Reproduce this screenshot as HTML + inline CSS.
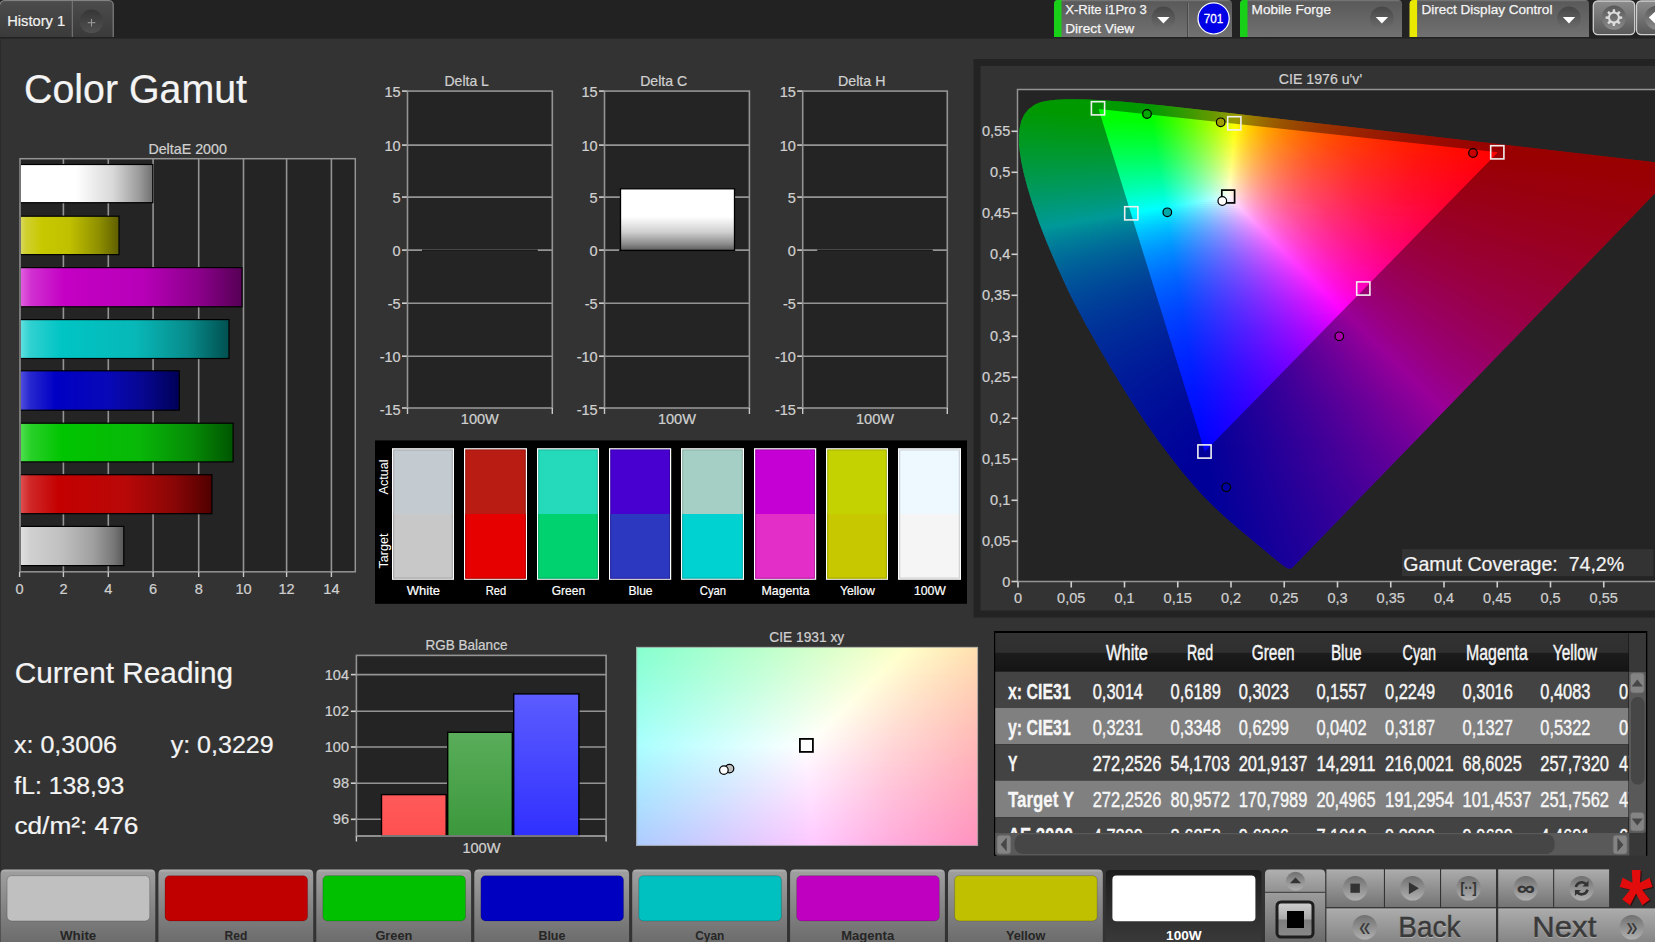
<!DOCTYPE html><html><head><meta charset="utf-8"><title>Color Gamut</title><style>html,body{margin:0;padding:0;background:#333;overflow:hidden}
body{width:1655px;height:942px;position:relative;font-family:"Liberation Sans",sans-serif}
.cie{position:absolute;overflow:hidden}
.cie i{position:absolute;left:0;width:100%;display:block}
svg{position:absolute;left:0;top:0}
text{font-family:"Liberation Sans","DejaVu Sans",sans-serif;white-space:pre}
.u{z-index:0}.o{z-index:2}.cie{z-index:1}
</style></head><body><svg class="u" width="1655" height="942" viewBox="0 0 1655 942"><rect x="973.50" y="59.00" width="700.00" height="558.50" fill="#232323"/>
<rect x="980.50" y="66.00" width="700.00" height="544.50" fill="#333333"/>
<rect x="1017.50" y="89.50" width="640.00" height="492.00" fill="#242424"/></svg><div class="cie" style="left:1018px;top:90px;width:637px;height:492px;clip-path:polygon(274.0px 477.9px,663.5px 76.0px,663.6px 75.6px,663.5px 75.2px,204.4px 22.2px,144.9px 15.6px,105.1px 11.7px,84.4px 10.2px,68.5px 9.4px,50.3px 9.3px,38.3px 9.8px,29.8px 10.7px,24.5px 11.8px,21.9px 12.6px,17.1px 14.6px,14.9px 15.9px,10.7px 19.2px,7.2px 23.3px,5.7px 25.7px,3.3px 31.3px,1.7px 37.9px,0.9px 45.6px,1.0px 54.4px,1.5px 59.3px,3.1px 70.4px,5.8px 83.2px,9.6px 97.8px,14.8px 114.5px,21.4px 133.2px,29.4px 153.7px,38.7px 175.5px,49.2px 198.5px,55.0px 210.3px,67.5px 234.0px,80.9px 257.6px,94.5px 280.7px,108.2px 302.9px,114.9px 313.5px,128.2px 333.4px,140.9px 351.4px,153.0px 367.6px,164.4px 382.0px,174.8px 394.3px,183.9px 404.4px,195.8px 416.5px,206.5px 426.5px,219.1px 437.5px,257.6px 469.6px,265.5px 475.8px,269.8px 478.4px,272.1px 478.6px)"><i style="top:8px;height:2px;background:linear-gradient(90deg,#0f0 34px,#0f0 83px)"></i><i style="top:10px;height:2px;background:linear-gradient(90deg,#0f0 21px,#0f0 110px)"></i><i style="top:12px;height:2px;background:linear-gradient(90deg,#0f0 16px,#01ff00 131px)"></i><i style="top:14px;height:2px;background:linear-gradient(90deg,#0f0 12px,#0f0 130px,#30ff00 151px)"></i><i style="top:16px;height:2px;background:linear-gradient(90deg,#0f0 10px,#0f0 131px,#5eff00 169px)"></i><i style="top:18px;height:2px;background:linear-gradient(90deg,#00ff02 7px,#0f0 131px,#43ff00 159px,#93ff00 187px)"></i><i style="top:20px;height:2px;background:linear-gradient(90deg,#00ff05 6px,#0f0 40px,#01ff00 132px,#61ff00 170px,#96ff00 188px,#cdff00 205px)"></i><i style="top:22px;height:2px;background:linear-gradient(90deg,#00ff09 4px,#0f0 61px,#0f0 132px,#3aff00 156px,#7f0 178px,#b9ff00 199px,#fdff00 218px,#fff200 222px)"></i><i style="top:24px;height:2px;background:linear-gradient(90deg,#00ff0c 3px,#0f0 82px,#0f0 132px,#35ff00 154px,#74ff00 177px,#b6ff00 198px,#feff00 218px,#ffdb00 229px,#ffbd00 240px)"></i><i style="top:26px;height:2px;background:linear-gradient(90deg,#00ff0f 2px,#0f0 104px,#01ff00 133px,#39ff00 156px,#7f0 178px,#baff00 199px,#feff00 218px,#ffc600 236px,#ff9800 257px)"></i><i style="top:28px;height:2px;background:linear-gradient(90deg,#00ff13 1px,#0f0 133px,#39ff00 156px,#7f0 178px,#baff00 199px,#ff0 218px,#ffd900 229px,#ffb700 242px,#ff9800 257px,#ff7d00 274px)"></i><i style="top:30px;height:2px;background:linear-gradient(90deg,#00ff16 1px,#00ff03 133px,#36ff00 155px,#74ff00 177px,#b3ff00 197px,#fffe00 218px,#ffd000 232px,#ffa600 249px,#ff8300 269px,#ff6500 292px)"></i><i style="top:32px;height:2px;background:linear-gradient(90deg,#00ff19 0px,#01ff07 134px,#3bff02 157px,#7f0 178px,#b7ff00 198px,#fdff00 217px,#ffc700 235px,#ff9a00 255px,#ff7300 280px,#ff5400 309px)"></i><i style="top:34px;height:2px;background:linear-gradient(90deg,#00ff1d 0px,#00ff0b 134px,#3aff07 157px,#76ff03 178px,#b7ff00 198px,#fdff00 217px,#ffda00 228px,#ffc100 237px,#ffa700 248px,#ff8e00 261px,#f60 290px,#ff4500 326px)"></i><i style="top:36px;height:2px;background:linear-gradient(90deg,#00ff20 0px,#00ff10 134px,#37ff0c 156px,#76ff08 178px,#b8ff03 198px,#feff00 217px,#ffd900 228px,#fb0 239px,#ff9e00 252px,#ff8500 266px,#ff5b00 300px,#ff3800 344px)"></i><i style="top:38px;height:2px;background:linear-gradient(90deg,#00ff24 0px,#01ff14 135px,#3cff11 158px,#79ff0d 179px,#bbff08 199px,#ffff04 217px,#ffd901 228px,#ffb500 241px,#ff9700 255px,#ff7d00 271px,#f60 289px,#ff5100 310px,#ff2e00 361px)"></i><i style="top:40px;height:2px;background:linear-gradient(90deg,#00ff27 0px,#00ff19 135px,#39ff16 157px,#76ff12 178px,#b8ff0e 198px,#ffff0a 217px,#ffd506 229px,#ffb002 243px,#ff9100 258px,#ff7500 276px,#ff5d00 297px,#ff4800 320px,#ff2500 378px)"></i><i style="top:42px;height:2px;background:linear-gradient(90deg,#00ff2a 0px,#00ff1e 135px,#35ff1b 156px,#76ff17 178px,#b8ff14 198px,#fcff10 216px,#fffe10 217px,#ffce0a 231px,#ffaa06 245px,#ff8a02 262px,#ff6e00 281px,#f50 304px,#ff4000 330px,#ff2d00 361px,#ff1d00 396px)"></i><i style="top:44px;height:2px;background:linear-gradient(90deg,#00ff2e 0px,#01ff22 136px,#3aff1f 158px,#79ff1c 179px,#b8ff19 198px,#fdff16 216px,#ffcd0f 231px,#ffa70a 246px,#ff8506 264px,#ff6701 286px,#ff4e00 311px,#ff3900 340px,#ff2600 374px,#ff1600 413px)"></i><i style="top:46px;height:2px;background:linear-gradient(90deg,#00ff31 0px,#00ff27 136px,#37ff25 157px,#72ff22 177px,#aeff1f 195px,#feff1c 216px,#fffc1b 217px,#ffcc14 231px,#ffa20e 248px,#ff8009 267px,#ff6204 290px,#ff4800 317px,#ff3200 349px,#ff2000 386px,#ff1000 430px)"></i><i style="top:48px;height:2px;background:linear-gradient(90deg,#00ff35 0px,#00ff2c 136px,#37ff2a 157px,#75ff27 178px,#b9ff25 198px,#feff22 216px,#ffcb19 231px,#ff9f12 249px,#ff7b0b 270px,#ff5d06 294px,#ff4302 323px,#ff2d00 358px,#ff1a00 399px,#ff0b00 448px)"></i><i style="top:50px;height:2px;background:linear-gradient(90deg,#00ff38 0px,#01ff30 137px,#3cff2f 159px,#78ff2d 179px,#b9ff2b 198px,#ffff28 216px,#ffcb1e 231px,#ff9c16 250px,#ff770e 272px,#ff5809 298px,#ff3e04 329px,#ff2800 367px,#ff1500 412px,#ff0600 465px)"></i><i style="top:52px;height:2px;background:linear-gradient(90deg,#00ff3c 0px,#00ff35 137px,#38ff34 158px,#75ff32 178px,#b6ff31 197px,#fffe2e 216px,#ffe028 224px,#ffc723 232px,#ff9a19 251px,#ff7311 274px,#ff530b 302px,#ff3905 336px,#ff2301 376px,#f10 424px,#ff0200 482px)"></i><i style="top:54px;height:2px;background:linear-gradient(90deg,#00ff40 0px,#00ff3a 137px,#35ff39 157px,#75ff38 178px,#b2ff37 196px,#fffd35 216px,#ffdf2e 224px,#ffc327 233px,#ff951d 253px,#ff6f14 277px,#ff4e0d 307px,#ff3306 344px,#ff1d01 389px,#ff0800 453px,#f00 500px)"></i><i style="top:56px;height:2px;background:linear-gradient(90deg,#00ff43 0px,#01ff3f 138px,#3aff3f 159px,#74ff3e 178px,#afff3d 195px,#fffc3b 216px,#ffdb33 225px,#ffc02c 234px,#ff9020 255px,#ff6916 281px,#ff490e 312px,#ff2d07 354px,#ff1602 405px,#f00 485px,#f00 517px)"></i><i style="top:58px;height:2px;background:linear-gradient(90deg,#00ff47 0px,#00ff45 138px,#37ff44 158px,#71ff43 177px,#acff43 194px,#feff42 215px,#fffc41 216px,#ffda38 225px,#ffbf31 234px,#ffa62a 244px,#ff8e24 256px,#ff6619 283px,#ff4410 317px,#ff2708 364px,#ff1002 423px,#f00 483px,#f00 535px)"></i><i style="top:60px;height:2px;background:linear-gradient(90deg,#00ff4b 0px,#00ff4a 138px,#39ff4a 159px,#77ff49 179px,#bbff49 198px,#ffff49 215px,#ffdd3f 224px,#ffbe36 234px,#ffa32e 245px,#ff8b27 257px,#ff611b 286px,#ff4112 321px,#ff2209 373px,#ff0a02 439px,#f00 481px,#f00 552px)"></i><i style="top:62px;height:2px;background:linear-gradient(90deg,#00ff4e 0px,#00ff4f 138px,#33ff4f 157px,#74ff4f 178px,#b3ff4f 196px,#fffe4f 215px,#ffdc45 224px,#ffbd3b 234px,#ffa233 245px,#ff882b 258px,#ff5e1e 288px,#ff3d13 325px,#ff1e0a 381px,#ff0602 455px,#ff0001 480px,#f00 569px)"></i><i style="top:64px;height:2px;background:linear-gradient(90deg,#00ff52 0px,#00ff54 139px,#38ff55 159px,#74ff55 178px,#b4ff56 196px,#fffd56 215px,#ffdb4a 224px,#ffb93f 235px,#ff9d36 247px,#ff842e 260px,#ff5a20 291px,#ff3915 330px,#ff190a 392px,#ff0102 475px,#f00 587px)"></i><i style="top:66px;height:2px;background:linear-gradient(90deg,#00ff56 0px,#00ff5a 139px,#37ff5a 159px,#73ff5b 178px,#b0ff5c 195px,#fffd5d 215px,#ffda50 224px,#ffb945 235px,#ff9c3a 247px,#ff8131 261px,#ff5722 293px,#ff3516 334px,#ff170c 395px,#ff0004 475px,#f00 604px)"></i><i style="top:68px;height:2px;background:linear-gradient(90deg,#00ff5a 0px,#00ff5f 139px,#31ff60 157px,#70ff61 177px,#acff63 194px,#feff64 214px,#fffc63 215px,#ffd655 225px,#ffb549 236px,#ff993e 248px,#ff7f35 262px,#ff682c 278px,#ff5324 296px,#ff3218 339px,#ff160d 397px,#ff0005 473px,#f00 621px)"></i><i style="top:70px;height:2px;background:linear-gradient(90deg,#00ff5e 1px,#01ff65 140px,#39ff66 160px,#76ff68 179px,#b8ff6a 197px,#ffff6c 214px,#ffd85c 224px,#ffb74f 235px,#ff9843 248px,#ff7e39 262px,#ff6730 278px,#ff5227 297px,#ff301a 341px,#ff150f 398px,#ff0007 471px,#f00 573px,#f00 637px)"></i><i style="top:72px;height:2px;background:linear-gradient(90deg,#00ff62 1px,#00ff6a 140px,#39ff6c 160px,#76ff6e 179px,#b8ff70 197px,#fffe73 214px,#ffd762 224px,#ffb654 235px,#ff9747 248px,#ff7d3d 262px,#f63 278px,#ff512a 297px,#ff2f1c 341px,#ff1511 397px,#ff0009 469px,#f00 637px)"></i><i style="top:74px;height:2px;background:linear-gradient(90deg,#0f6 1px,#00ff70 140px,#32ff72 158px,#73ff75 178px,#b1ff77 195px,#fffe7a 214px,#ffd668 224px,#ffb55a 235px,#ff964c 248px,#ff7c41 262px,#ff6537 278px,#ff502d 297px,#ff2e1e 341px,#ff1513 396px,#ff000a 467px,#f00 637px)"></i><i style="top:76px;height:2px;background:linear-gradient(90deg,#00ff6a 2px,#01ff76 141px,#3bff78 161px,#76ff7b 179px,#b1ff7e 195px,#fffd81 214px,#ffd66e 224px,#ffb45f 235px,#ff9551 248px,#ff7c45 262px,#ff653a 278px,#ff4f30 297px,#ff2e21 341px,#ff1415 396px,#ff000c 465px,#f00 637px)"></i><i style="top:78px;height:2px;background:linear-gradient(90deg,#00ff6e 2px,#00ff7c 141px,#37ff7f 160px,#72ff82 178px,#adff85 194px,#feff89 213px,#fffc88 214px,#ffd575 224px,#ffb364 235px,#ff9455 248px,#ff7b49 262px,#ff643e 278px,#ff4f34 297px,#ff2d23 341px,#ff1417 395px,#ff000d 464px,#ff0001 637px)"></i><i style="top:80px;height:2px;background:linear-gradient(90deg,#00ff72 3px,#00ff81 141px,#30ff84 158px,#6eff88 177px,#b6ff8c 196px,#feff91 213px,#fffb8f 214px,#ffd47b 224px,#ffb26a 235px,#ff945a 248px,#ff7a4d 262px,#ff6341 278px,#ff4e37 297px,#ff2c26 341px,#ff1319 395px,#ff000f 462px,#ff0002 637px)"></i><i style="top:82px;height:2px;background:linear-gradient(90deg,#00ff76 3px,#01ff88 142px,#3cff8c 162px,#79ff90 180px,#baff94 197px,#ffff98 213px,#ffd683 223px,#ffb471 234px,#ff9761 246px,#ff7c53 260px,#ff6546 276px,#ff503b 294px,#ff2d29 339px,#ff141b 392px,#f01 460px,#ff0003 637px)"></i><i style="top:84px;height:2px;background:linear-gradient(90deg,#00ff7a 3px,#00ff8e 142px,#38ff92 161px,#75ff96 179px,#b6ff9b 196px,#fffea0 213px,#ffd589 223px,#ffb376 234px,#ff9666 246px,#ff7b57 260px,#ff644a 276px,#ff4f3f 294px,#ff2c2b 339px,#ff131d 392px,#ff0013 458px,#ff0004 637px)"></i><i style="top:86px;height:2px;background:linear-gradient(90deg,#00ff7e 4px,#00ff94 142px,#31ff98 159px,#71ff9d 178px,#aeffa2 194px,#fffda7 213px,#ffd590 223px,#ffb27c 234px,#ff956b 246px,#ff7b5b 260px,#ff634e 276px,#ff4f42 294px,#ff2c2e 339px,#ff1320 391px,#ff0014 456px,#ff0005 637px)"></i><i style="top:88px;height:2px;background:linear-gradient(90deg,#00ff82 5px,#01ff9a 143px,#3aff9f 162px,#75ffa4 179px,#aeffa9 194px,#fdffb0 212px,#fffcaf 213px,#ffd496 223px,#ffb181 234px,#ff9470 246px,#ff7a60 260px,#ff6252 276px,#ff4e45 294px,#ff2b30 339px,#ff1322 390px,#ff0016 454px,#ff0006 637px)"></i><i style="top:90px;height:2px;background:linear-gradient(90deg,#00ff87 5px,#00ffa1 143px,#37ffa6 161px,#71ffab 178px,#b7ffb2 196px,#feffb9 212px,#fffbb6 213px,#ffd69f 222px,#ffb389 233px,#ff9375 246px,#ff7964 260px,#ff6155 276px,#ff4d49 294px,#ff2a33 339px,#ff1324 389px,#ff0018 452px,#ff0007 637px)"></i><i style="top:92px;height:2px;background:linear-gradient(90deg,#00ff8b 6px,#00ff98 81px,#00ffa7 143px,#33ffac 160px,#74ffb3 179px,#b7ffba 196px,#ffffc1 212px,#ffd9a8 221px,#ffb590 232px,#ff947b 245px,#ff796a 259px,#ff625a 275px,#ff4d4d 293px,#ff2b36 337px,#ff1326 387px,#ff001a 450px,#ff0008 637px)"></i><i style="top:94px;height:2px;background:linear-gradient(90deg,#00ff90 6px,#00ff9d 81px,#01ffae 144px,#3cffb4 163px,#78ffbb 180px,#b7ffc2 196px,#fffec9 212px,#ffd8af 221px,#ffb496 232px,#ff9380 245px,#ff796e 259px,#ff615e 275px,#ff4c50 293px,#ff2a39 337px,#ff1329 386px,#ff001c 448px,#ff0009 637px)"></i><i style="top:96px;height:2px;background:linear-gradient(90deg,#00ff94 7px,#00ffa3 82px,#00ffb4 144px,#38ffbb 162px,#74ffc2 179px,#afffc9 194px,#fffdd1 212px,#ffd7b6 221px,#ffb39c 232px,#ff9285 245px,#ff7872 259px,#ff6062 275px,#ff4c53 293px,#ff2a3b 337px,#ff132b 385px,#ff001e 446px,#ff000a 637px)"></i><i style="top:98px;height:2px;background:linear-gradient(90deg,#00ff98 7px,#00ffa8 82px,#0fb 144px,#31ffc1 160px,#70ffc9 178px,#abffd0 193px,#fdffdb 211px,#fffcd9 212px,#ffd6bd 221px,#ffb2a2 232px,#ff918a 245px,#f77 259px,#ff5f66 275px,#ff4b57 293px,#ff293e 337px,#ff122d 385px,#ff0020 444px,#ff0014 529px,#ff000b 637px)"></i><i style="top:100px;height:2px;background:linear-gradient(90deg,#00ff9d 8px,#00ffae 83px,#01ffc2 145px,#3affca 163px,#73ffd1 179px,#b8ffda 196px,#feffe4 211px,#fffbe1 212px,#ffd5c4 221px,#ffb1a8 232px,#ff9391 244px,#ff787d 258px,#ff606a 274px,#ff4b5b 292px,#ff2840 337px,#ff122f 384px,#f02 442px,#ff0015 527px,#ff000c 637px)"></i><i style="top:102px;height:2px;background:linear-gradient(90deg,#00ffa2 8px,#00ffb3 83px,#00ffc9 145px,#39ffd1 163px,#77ffda 180px,#b9ffe3 196px,#ffffed 211px,#ffd4cb 221px,#ffb3b1 231px,#ff9498 243px,#ff7883 257px,#ff606f 273px,#ff4b5f 291px,#ff2944 335px,#ff1232 382px,#ff0024 440px,#ff0017 526px,#ff000d 637px)"></i><i style="top:104px;height:2px;background:linear-gradient(90deg,#00ffa6 9px,#00ffb9 83px,#00ffd0 145px,#32ffd7 161px,#73ffe1 179px,#b5ffeb 195px,#fffef5 211px,#ffd7d5 220px,#ffb2b7 231px,#ff939e 243px,#ff7787 257px,#ff5f73 273px,#ff4a62 291px,#ff2846 335px,#ff1234 381px,#ff0026 438px,#ff0018 525px,#ff000e 637px)"></i><i style="top:106px;height:2px;background:linear-gradient(90deg,#00ffab 10px,#00ffbf 85px,#01ffd7 146px,#3cffe1 164px,#77ffea 180px,#b5fff4 195px,#fffdfe 211px,#ffd6dc 220px,#ffb1bd 231px,#ff92a3 243px,#ff768c 257px,#ff5e77 273px,#ff4a66 291px,#ff2749 335px,#ff1237 380px,#ff0028 436px,#ff001a 523px,#ff000f 637px)"></i><i style="top:108px;height:2px;background:linear-gradient(90deg,#00ffb0 10px,#00ffc5 85px,#00ffdf 146px,#31ffe7 161px,#63ffef 175px,#c3ffff 198px,#fff3fe 213px,#ffcddd 222px,#ffaabe 233px,#ff8da5 245px,#ff728e 259px,#ff5b79 275px,#ff4768 293px,#ff254a 338px,#ff1139 381px,#ff002a 434px,#ff001b 521px,#ff0010 635px)"></i><i style="top:110px;height:2px;background:linear-gradient(90deg,#00ffb5 11px,#00ffcb 85px,#00ffe6 146px,#41fff1 166px,#8fffff 186px,#ffe9fe 215px,#ffc5de 224px,#ffa4c0 235px,#ff85a4 248px,#ff6c8e 262px,#ff567a 278px,#ff4369 296px,#ff234b 341px,#ff103a 382px,#ff002c 432px,#ff001d 519px,#f01 633px)"></i><i style="top:112px;height:2px;background:linear-gradient(90deg,#00ffba 12px,#00ffd1 86px,#01ffee 147px,#62ffff 175px,#ffdffe 217px,#ffbadc 227px,#ff9bbf 238px,#ff80a6 250px,#ff688f 264px,#ff537c 280px,#ff406a 298px,#ff214d 343px,#ff0f3c 383px,#ff002e 430px,#ff001e 517px,#ff0012 631px)"></i><i style="top:114px;height:2px;background:linear-gradient(90deg,#00ffbf 12px,#00ffd7 86px,#00fff5 147px,#35ffff 163px,#94ecff 190px,#ffd6fe 219px,#ffb3dc 229px,#ff95c0 240px,#ff7aa6 253px,#ff6390 267px,#ff3c6a 302px,#ff1e4e 346px,#ff0e3e 384px,#ff0030 429px,#ff0020 516px,#ff0013 629px)"></i><i style="top:116px;height:2px;background:linear-gradient(90deg,#00ffc4 13px,#00ffde 87px,#00fffd 147px,#73eaff 182px,#ffcdfe 221px,#ffacdd 231px,#ff8fc1 242px,#ff75a7 255px,#ff5f91 269px,#ff396c 304px,#ff1c4f 349px,#f03 427px,#ff0021 514px,#ff0014 627px)"></i><i style="top:118px;height:2px;background:linear-gradient(90deg,#00ffc9 14px,#00ffe2 82px,#0ff 138px,#00faff 147px,#6ce3ff 181px,#ffc5fe 223px,#ffa5de 233px,#ff8ac2 244px,#ff71a8 257px,#ff5a91 272px,#ff366d 307px,#ff1a50 352px,#ff0035 425px,#ff0023 512px,#ff0015 625px)"></i><i style="top:120px;height:2px;background:linear-gradient(90deg,#00ffce 14px,#00ffe4 74px,#0ff 126px,#00f2ff 148px,#79d9ff 186px,#ffbcfe 225px,#ff9edf 235px,#ff82c1 247px,#ff6ba8 260px,#ff5793 274px,#ff346e 309px,#ff1851 354px,#ff0037 423px,#ff0025 509px,#ff0017 623px)"></i><i style="top:122px;height:2px;background:linear-gradient(90deg,#00ffd3 15px,#00ffe8 68px,#0ff 114px,#00ebff 148px,#75d2ff 186px,#ffb5fe 227px,#ff98df 237px,#ff7dc2 249px,#ff67a9 262px,#ff5394 276px,#ff316f 312px,#ff1652 357px,#ff003a 421px,#ff0027 507px,#ff0018 621px)"></i><i style="top:124px;height:2px;background:linear-gradient(90deg,#00ffd9 16px,#0ff 102px,#00e4ff 148px,#6fccff 185px,#ffadfe 229px,#ff95e3 238px,#ff7cc7 249px,#ff559b 274px,#ff3578 305px,#ff1d5c 343px,#ff0d4b 378px,#ff003c 419px,#ff0028 505px,#ff0019 619px)"></i><i style="top:126px;height:2px;background:linear-gradient(90deg,#00ffde 16px,#0ff 90px,#0df 149px,#7bc3ff 190px,#ffa6fe 231px,#ff8fe3 240px,#ff77c8 251px,#ff519c 276px,#ff3379 307px,#ff1b5e 345px,#ff003f 417px,#ff002a 503px,#ff001a 617px)"></i><i style="top:128px;height:2px;background:linear-gradient(90deg,#00ffe4 17px,#0ff 78px,#00d7ff 149px,#77bdff 190px,#ff9ffe 233px,#ff89e4 242px,#ff73c9 253px,#ff4e9e 278px,#ff317b 309px,#ff195f 347px,#ff0041 415px,#ff002c 501px,#ff001b 616px)"></i><i style="top:130px;height:2px;background:linear-gradient(90deg,#00ffe9 18px,#0ff 66px,#00d1ff 149px,#71b8ff 189px,#ff99fe 235px,#ff83e4 244px,#ff6eca 255px,#ff4b9f 280px,#ff2e7c 311px,#ff1860 349px,#f04 413px,#ff002d 499px,#ff001d 614px)"></i><i style="top:132px;height:2px;background:linear-gradient(90deg,#00ffef 19px,#0ff 54px,#00cbff 150px,#79b0ff 193px,#ff93fe 237px,#ff7ee5 246px,#ff6acb 257px,#ff48a0 282px,#ff2c7e 313px,#ff1662 351px,#ff0046 411px,#ff002f 497px,#ff001e 612px)"></i><i style="top:134px;height:2px;background:linear-gradient(90deg,#00fff5 19px,#0ff 42px,#00c5ff 150px,#79abff 194px,#ff8dff 239px,#ff79e5 248px,#ff65cc 259px,#ff45a1 284px,#ff2a7f 315px,#ff1564 352px,#ff0049 409px,#ff0031 495px,#ff001f 610px)"></i><i style="top:136px;height:2px;background:linear-gradient(90deg,#00fffa 20px,#0ff 30px,#00f9ff 43px,#00c0ff 150px,#73a6ff 193px,#ff87ff 241px,#ff61cc 261px,#ff42a3 286px,#ff2880 317px,#ff1365 354px,#ff004b 407px,#f03 493px,#ff0021 608px)"></i><i style="top:138px;height:2px;background:linear-gradient(90deg,#00feff 21px,#0bf 151px,#7b9fff 197px,#ff81ff 243px,#ff5dcd 263px,#ff3fa4 288px,#ff2682 319px,#ff1266 356px,#ff004e 405px,#ff0035 491px,#f02 606px)"></i><i style="top:140px;height:2px;background:linear-gradient(90deg,#00f8ff 22px,#00b6ff 151px,#779bff 197px,#ff7cff 245px,#ff59ce 265px,#ff3ca5 290px,#ff2484 320px,#ff1068 357px,#ff0051 403px,#ff003f 456px,#ff0030 523px,#ff0023 604px)"></i><i style="top:142px;height:2px;background:linear-gradient(90deg,#00f2ff 22px,#00b1ff 151px,#7496ff 197px,#f7f 247px,#ff55cf 267px,#ff39a6 292px,#ff2285 322px,#ff0f69 359px,#ff0054 401px,#ff0040 457px,#ff0031 522px,#ff0025 602px)"></i><i style="top:144px;height:2px;background:linear-gradient(90deg,#00edff 23px,#01acff 152px,#7c90ff 201px,#ff72ff 249px,#ff52cf 269px,#ff36a7 294px,#ff2086 324px,#ff0d6a 361px,#ff0057 399px,#ff0042 458px,#f03 522px,#ff0026 600px)"></i><i style="top:146px;height:2px;background:linear-gradient(90deg,#00e7ff 24px,#00a8ff 152px,#798cff 201px,#ff6dff 251px,#ff4ed0 271px,#ff34a8 296px,#ff1e87 326px,#ff0c6c 362px,#ff005a 397px,#ff0043 458px,#ff0034 521px,#ff0027 598px)"></i><i style="top:148px;height:2px;background:linear-gradient(90deg,#00e2ff 25px,#00a4ff 152px,#7688ff 201px,#ff68ff 253px,#ff4ad1 273px,#ff31a9 298px,#ff1c88 328px,#ff0b6d 364px,#ff005d 395px,#ff0045 459px,#ff0035 521px,#ff0029 596px)"></i><i style="top:150px;height:2px;background:linear-gradient(90deg,#0df 26px,#019fff 153px,#7d82ff 205px,#ff63ff 255px,#ff47d1 275px,#ff2faa 300px,#ff1a8a 330px,#ff0a6f 365px,#ff0060 393px,#ff0046 459px,#ff0037 520px,#ff002a 594px)"></i><i style="top:152px;height:2px;background:linear-gradient(90deg,#00d9ff 26px,#009bff 153px,#7a7eff 205px,#ff5fff 257px,#ff44d2 277px,#ff2cab 302px,#ff188b 332px,#ff0870 367px,#ff0063 391px,#ff0048 460px,#ff0038 520px,#ff002b 592px)"></i><i style="top:154px;height:2px;background:linear-gradient(90deg,#00d4ff 27px,#0097ff 153px,#757cff 204px,#ff5bff 259px,#ff3fd1 280px,#ff2aac 304px,#ff178d 333px,#ff0772 368px,#f06 389px,#ff004a 459px,#ff003a 519px,#ff002d 590px)"></i><i style="top:156px;height:2px;background:linear-gradient(90deg,#00cfff 28px,#0193ff 154px,#7c76ff 208px,#ff57ff 261px,#ff3cd2 282px,#ff27ad 306px,#ff158e 335px,#ff0673 370px,#ff0069 388px,#ff004b 460px,#ff002e 588px)"></i><i style="top:158px;height:2px;background:linear-gradient(90deg,#00cbff 29px,#0090ff 154px,#7b72ff 209px,#ff53ff 263px,#ff39d2 284px,#ff25ae 308px,#ff138f 337px,#ff0575 371px,#ff006c 386px,#ff004c 460px,#ff0030 586px)"></i><i style="top:160px;height:2px;background:linear-gradient(90deg,#00c6ff 30px,#008cff 154px,#7670ff 208px,#ff4fff 265px,#ff36d3 286px,#ff23af 310px,#ff1290 339px,#ff0376 373px,#ff006f 384px,#ff0060 413px,#ff004e 461px,#ff0031 585px)"></i><i style="top:162px;height:2px;background:linear-gradient(90deg,#00c2ff 30px,#0188ff 155px,#7d6aff 212px,#ff4bff 267px,#ff34d3 288px,#ff20b0 312px,#ff1092 340px,#ff0278 374px,#ff0062 414px,#ff004f 461px,#ff0032 583px)"></i><i style="top:164px;height:2px;background:linear-gradient(90deg,#00beff 31px,#0085ff 155px,#7c67ff 213px,#ff47ff 269px,#ff32d6 289px,#ff1fb2 313px,#ff0f94 341px,#ff0179 375px,#ff0064 414px,#ff0051 461px,#ff0034 581px)"></i><i style="top:166px;height:2px;background:linear-gradient(90deg,#00baff 32px,#0082ff 155px,#7865ff 212px,#f4f 271px,#ff2fd6 291px,#ff1db3 315px,#ff0e95 343px,#ff007a 377px,#ff0065 416px,#ff0052 462px,#ff0035 579px)"></i><i style="top:168px;height:2px;background:linear-gradient(90deg,#00b6ff 33px,#017fff 156px,#7e60ff 216px,#ff40ff 273px,#ff2cd7 293px,#ff1bb3 317px,#ff0c96 345px,#ff007c 378px,#f06 417px,#ff0054 462px,#ff0037 577px)"></i><i style="top:170px;height:2px;background:linear-gradient(90deg,#00b2ff 34px,#007cff 156px,#7d5dff 217px,#ff3dff 275px,#ff2ad7 295px,#ff19b4 319px,#ff0a97 347px,#ff007e 379px,#ff0068 417px,#ff0056 462px,#ff0039 575px)"></i><i style="top:172px;height:2px;background:linear-gradient(90deg,#00afff 35px,#0079ff 156px,#795bff 216px,#ff3aff 277px,#ff27d8 297px,#ff17b5 321px,#ff0997 349px,#ff007f 381px,#ff006a 418px,#ff0057 462px,#ff003a 573px)"></i><i style="top:174px;height:2px;background:linear-gradient(90deg,#00abff 36px,#0176ff 157px,#7d57ff 219px,#ff36ff 279px,#ff24d8 299px,#ff15b6 323px,#ff0a9f 344px,#ff018a 368px,#ff0080 382px,#ff006b 419px,#ff0059 462px,#ff003c 571px)"></i><i style="top:176px;height:2px;background:linear-gradient(90deg,#00a8ff 36px,#0073ff 157px,#7c54ff 220px,#f3f 281px,#ff22d9 301px,#ff13b8 324px,#ff008e 367px,#ff0082 383px,#ff006d 420px,#ff005b 462px,#ff003d 569px)"></i><i style="top:178px;height:2px;background:linear-gradient(90deg,#00a4ff 37px,#0070ff 157px,#7a52ff 220px,#ff30ff 283px,#ff20d9 303px,#ff11b8 326px,#ff0092 365px,#ff0084 384px,#ff006e 420px,#ff005c 462px,#ff003f 567px)"></i><i style="top:180px;height:2px;background:linear-gradient(90deg,#00a1ff 38px,#016dff 158px,#7e4eff 223px,#ff2dff 285px,#ff1dd9 305px,#ff0fb9 328px,#ff0096 363px,#ff0085 385px,#ff0070 421px,#ff005e 462px,#ff0041 565px)"></i><i style="top:182px;height:2px;background:linear-gradient(90deg,#009eff 39px,#006bff 158px,#7d4bff 224px,#ff2bff 287px,#ff1bda 307px,#ff0eba 330px,#f09 362px,#ff0086 387px,#ff0071 422px,#ff005f 463px,#ff0042 563px)"></i><i style="top:184px;height:2px;background:linear-gradient(90deg,#009aff 40px,#0068ff 158px,#794aff 223px,#ff28ff 289px,#ff19da 309px,#ff0cbb 332px,#ff009e 360px,#f08 388px,#ff0073 422px,#ff0061 462px,#f04 561px)"></i><i style="top:186px;height:2px;background:linear-gradient(90deg,#0097ff 41px,#0166ff 159px,#7c46ff 226px,#ff25ff 291px,#ff17db 311px,#ff0abc 333px,#ff00a2 358px,#ff0089 389px,#ff0075 423px,#ff0063 462px,#ff0046 559px)"></i><i style="top:188px;height:2px;background:linear-gradient(90deg,#0094ff 42px,#0063ff 159px,#7c44ff 227px,#f2f 293px,#ff14db 313px,#ff09bd 335px,#ff00a7 356px,#ff008b 390px,#ff0076 424px,#ff0065 462px,#ff0047 557px)"></i><i style="top:190px;height:2px;background:linear-gradient(90deg,#0091ff 43px,#0061ff 159px,#7a42ff 227px,#ff20ff 295px,#ff12dc 315px,#ff07be 337px,#ff00ab 354px,#ff008c 391px,#ff0078 424px,#f06 462px,#ff0049 555px)"></i><i style="top:192px;height:2px;background:linear-gradient(90deg,#008eff 44px,#015eff 160px,#7d3fff 230px,#ff1dff 297px,#ff10dc 317px,#ff05be 339px,#ff00b0 352px,#ff008d 393px,#ff0067 463px,#ff004a 554px)"></i><i style="top:194px;height:2px;background:linear-gradient(90deg,#008bff 45px,#005cff 160px,#7d3cff 231px,#ff1bff 299px,#ff0edc 319px,#ff04bf 341px,#ff00a5 366px,#ff008f 394px,#ff0069 463px,#ff004c 552px)"></i><i style="top:196px;height:2px;background:linear-gradient(90deg,#08f 46px,#005aff 160px,#7b3bff 231px,#ff19ff 301px,#ff0cdd 321px,#ff02c1 342px,#ff00a7 367px,#ff0090 395px,#ff006b 463px,#ff004e 550px)"></i><i style="top:198px;height:2px;background:linear-gradient(90deg,#0086ff 46px,#0158ff 161px,#7c38ff 233px,#ff16ff 303px,#ff0add 323px,#ff01c1 344px,#ff00a8 368px,#ff0092 396px,#ff006c 463px,#ff0050 548px)"></i><i style="top:200px;height:2px;background:linear-gradient(90deg,#0083ff 47px,#0056ff 161px,#7c36ff 234px,#ff14ff 305px,#ff09dd 325px,#ff00c2 346px,#ff00a9 370px,#ff0093 397px,#ff006f 462px,#ff0052 546px)"></i><i style="top:202px;height:2px;background:linear-gradient(90deg,#0080ff 48px,#0054ff 161px,#7c34ff 235px,#ff12ff 307px,#ff07df 326px,#ff00c4 347px,#ff00ab 371px,#ff0095 398px,#ff0070 462px,#ff0054 544px)"></i><i style="top:204px;height:2px;background:linear-gradient(90deg,#007eff 49px,#0152ff 162px,#7d31ff 237px,#ff10ff 309px,#ff00cf 340px,#ff00c4 349px,#ff00ab 373px,#ff0096 399px,#ff0072 462px,#f05 542px)"></i><i style="top:206px;height:2px;background:linear-gradient(90deg,#007bff 50px,#0050ff 162px,#7d2fff 238px,#ff0dff 311px,#ff00d5 338px,#ff00c5 351px,#ff00ad 374px,#ff0098 400px,#ff0074 462px,#ff0057 540px)"></i><i style="top:208px;height:2px;background:linear-gradient(90deg,#0079ff 51px,#004eff 162px,#7b2eff 238px,#ff0bff 313px,#ff00db 336px,#ff00c6 352px,#ff00ae 375px,#f09 401px,#ff0075 462px,#ff0059 538px)"></i><i style="top:210px;height:2px;background:linear-gradient(90deg,#0076ff 52px,#014cff 163px,#7e2bff 241px,#ff09ff 315px,#ff00e1 334px,#ff00c7 354px,#ff009b 401px,#ff0078 461px,#ff005b 536px)"></i><i style="top:212px;height:2px;background:linear-gradient(90deg,#0074ff 53px,#004aff 163px,#7d29ff 242px,#ff07ff 317px,#ff00e7 332px,#ff00c8 355px,#ff009d 402px,#ff0079 461px,#ff005d 534px)"></i><i style="top:214px;height:2px;background:linear-gradient(90deg,#0071ff 54px,#0049ff 163px,#7c28ff 242px,#ff05ff 319px,#ff00ec 331px,#ff00c9 357px,#ff009e 403px,#ff007b 461px,#ff005f 532px)"></i><i style="top:216px;height:2px;background:linear-gradient(90deg,#006fff 56px,#0147ff 164px,#7d26ff 244px,#ff03ff 321px,#ff00f2 329px,#ff00c9 359px,#ff00a0 404px,#ff007d 460px,#ff0061 530px)"></i><i style="top:218px;height:2px;background:linear-gradient(90deg,#006dff 57px,#0045ff 164px,#7d24ff 245px,#ff02ff 323px,#ff00e3 341px,#ff00cb 360px,#ff00a1 405px,#ff007f 460px,#ff0063 528px)"></i><i style="top:220px;height:2px;background:linear-gradient(90deg,#006aff 58px,#0043ff 164px,#7c22ff 246px,#f0f 325px,#f0c 362px,#ff00a2 406px,#ff0081 460px,#ff0065 526px)"></i><i style="top:222px;height:2px;background:linear-gradient(90deg,#0068ff 59px,#0142ff 165px,#7e20ff 248px,#f0f 327px,#ff00cd 363px,#ff00a4 407px,#ff0083 460px,#ff0067 524px)"></i><i style="top:224px;height:2px;background:linear-gradient(90deg,#06f 60px,#0040ff 165px,#7d1fff 249px,#ef00ff 320px,#f0f 329px,#ff00ce 365px,#ff00a5 408px,#ff0084 460px,#ff0069 523px)"></i><i style="top:226px;height:2px;background:linear-gradient(90deg,#0064ff 61px,#003fff 165px,#7b1eff 249px,#e900ff 318px,#f0f 331px,#ff00cf 366px,#ff00a7 408px,#ff0087 459px,#ff006b 521px)"></i><i style="top:228px;height:2px;background:linear-gradient(90deg,#0062ff 62px,#013dff 166px,#6f1fff 242px,#e300ff 316px,#f0f 333px,#ff00cf 368px,#ff00a9 409px,#f08 459px,#ff006d 519px)"></i><i style="top:230px;height:2px;background:linear-gradient(90deg,#0060ff 63px,#003bff 166px,#6c1fff 241px,#d0f 314px,#f0f 335px,#ff00d0 370px,#f0a 410px,#ff008a 459px,#ff0070 517px)"></i><i style="top:232px;height:2px;background:linear-gradient(90deg,#005eff 64px,#003aff 166px,#691eff 240px,#d700ff 312px,#f0f 337px,#ff00d1 371px,#ff00ac 411px,#ff008c 458px,#ff0072 515px)"></i><i style="top:234px;height:2px;background:linear-gradient(90deg,#005cff 65px,#0138ff 167px,#671dff 240px,#d200ff 311px,#f0f 339px,#ff00d3 372px,#ff00ae 411px,#ff008e 458px,#ff0074 513px)"></i><i style="top:236px;height:2px;background:linear-gradient(90deg,#005aff 66px,#0037ff 167px,#641cff 239px,#cd00ff 309px,#f0f 341px,#ff00d3 374px,#ff00af 412px,#ff0091 457px,#ff0076 511px)"></i><i style="top:238px;height:2px;background:linear-gradient(90deg,#0058ff 67px,#0036ff 167px,#621bff 238px,#c700ff 307px,#fe00ff 343px,#ff00d4 376px,#ff00b0 413px,#ff0092 457px,#ff0079 509px)"></i><i style="top:240px;height:2px;background:linear-gradient(90deg,#0056ff 68px,#0134ff 168px,#601aff 238px,#c100ff 305px,#fe00ff 345px,#ff00d5 377px,#ff00b3 413px,#ff0095 456px,#ff007b 507px)"></i><i style="top:242px;height:2px;background:linear-gradient(90deg,#0054ff 70px,#03f 168px,#5d1aff 237px,#bc00ff 303px,#fe00ff 347px,#ff00d5 379px,#ff00b4 414px,#ff0097 456px,#ff007d 505px)"></i><i style="top:244px;height:2px;background:linear-gradient(90deg,#0052ff 71px,#0032ff 168px,#5b19ff 236px,#b700ff 301px,#fe00ff 349px,#ff00d7 380px,#ff00b5 415px,#ff0098 456px,#ff0080 503px)"></i><i style="top:246px;height:2px;background:linear-gradient(90deg,#0051ff 72px,#0130ff 169px,#5818ff 235px,#b200ff 299px,#fe00ff 351px,#ff00d8 381px,#ff00b7 415px,#ff009b 455px,#ff0082 501px)"></i><i style="top:248px;height:2px;background:linear-gradient(90deg,#004fff 73px,#002fff 169px,#ad00ff 297px,#fe00ff 353px,#ff00d9 383px,#ff00b9 416px,#ff009d 455px,#ff0085 499px)"></i><i style="top:250px;height:2px;background:linear-gradient(90deg,#004dff 74px,#002eff 169px,#a800ff 295px,#fe00ff 355px,#ff00d9 385px,#ff00ba 417px,#ff009f 454px,#ff0087 497px)"></i><i style="top:252px;height:2px;background:linear-gradient(90deg,#004bff 75px,#012cff 170px,#a300ff 293px,#fe00ff 357px,#ff00da 386px,#ff00bc 417px,#ff00a2 453px,#ff008a 495px)"></i><i style="top:254px;height:2px;background:linear-gradient(90deg,#004aff 76px,#002bff 170px,#9e00ff 291px,#fe00ff 359px,#ff00dc 387px,#ff00be 418px,#ff00a3 453px,#ff008c 493px)"></i><i style="top:256px;height:2px;background:linear-gradient(90deg,#0048ff 77px,#002aff 170px,#9a00ff 289px,#fe00ff 361px,#ff00dc 389px,#ff00bf 419px,#ff00a5 453px,#ff008f 492px)"></i><i style="top:258px;height:2px;background:linear-gradient(90deg,#0046ff 79px,#0029ff 170px,#9500ff 287px,#fe00ff 363px,#f0d 390px,#ff00c1 419px,#ff00a8 452px,#ff0091 490px)"></i><i style="top:260px;height:2px;background:linear-gradient(90deg,#0045ff 80px,#0128ff 171px,#9100ff 285px,#fe00ff 365px,#ff00de 392px,#ff00c2 420px,#f0a 452px,#ff0094 488px)"></i><i style="top:262px;height:2px;background:linear-gradient(90deg,#0043ff 81px,#0027ff 171px,#8c00ff 283px,#fe00ff 367px,#ff00df 393px,#ff00c4 420px,#ff00ac 451px,#ff0097 486px)"></i><i style="top:264px;height:2px;background:linear-gradient(90deg,#0042ff 82px,#0026ff 171px,#80f 281px,#fe00ff 369px,#ff00df 395px,#ff00c6 421px,#f09 484px)"></i><i style="top:266px;height:2px;background:linear-gradient(90deg,#0040ff 83px,#0124ff 172px,#8400ff 279px,#fe00ff 371px,#ff00e1 396px,#ff00c8 421px,#ff009c 482px)"></i><i style="top:268px;height:2px;background:linear-gradient(90deg,#003eff 85px,#0023ff 172px,#8100ff 278px,#fe00ff 373px,#ff00e2 397px,#ff00c9 422px,#ff009f 480px)"></i><i style="top:270px;height:2px;background:linear-gradient(90deg,#003dff 86px,#02f 172px,#7d00ff 276px,#fe00ff 375px,#ff00cb 422px,#ff00a2 478px)"></i><i style="top:272px;height:2px;background:linear-gradient(90deg,#003cff 87px,#0121ff 173px,#7900ff 274px,#fe00ff 377px,#ff00cd 423px,#ff00a5 476px)"></i><i style="top:274px;height:2px;background:linear-gradient(90deg,#003aff 88px,#0020ff 173px,#7500ff 272px,#fe00ff 379px,#ff00cf 423px,#ff00a8 474px)"></i><i style="top:276px;height:2px;background:linear-gradient(90deg,#0039ff 89px,#001fff 173px,#7100ff 270px,#fe00ff 381px,#ff00d1 423px,#ff00ab 472px)"></i><i style="top:278px;height:2px;background:linear-gradient(90deg,#0037ff 90px,#011eff 174px,#6e00ff 268px,#fe00ff 383px,#ff00d2 424px,#ff00ae 470px)"></i><i style="top:280px;height:2px;background:linear-gradient(90deg,#0036ff 92px,#001dff 174px,#6a00ff 266px,#fe00ff 385px,#ff00d4 424px,#ff00b1 468px)"></i><i style="top:282px;height:2px;background:linear-gradient(90deg,#0035ff 93px,#001cff 174px,#60f 264px,#fe00ff 387px,#ff00d6 425px,#ff00b4 466px)"></i><i style="top:284px;height:2px;background:linear-gradient(90deg,#03f 94px,#011bff 175px,#6300ff 262px,#fe00ff 389px,#ff00d8 425px,#ff00b8 464px)"></i><i style="top:286px;height:2px;background:linear-gradient(90deg,#0032ff 95px,#001aff 175px,#5f00ff 260px,#fe00ff 391px,#ff00da 425px,#f0b 462px)"></i><i style="top:288px;height:2px;background:linear-gradient(90deg,#0030ff 97px,#001aff 175px,#5c00ff 258px,#fe00ff 393px,#ff00db 426px,#ff00be 461px)"></i><i style="top:290px;height:2px;background:linear-gradient(90deg,#002fff 98px,#0119ff 176px,#5800ff 256px,#fe00ff 395px,#f0d 426px,#ff00c1 459px)"></i><i style="top:292px;height:2px;background:linear-gradient(90deg,#002eff 99px,#0018ff 176px,#50f 254px,#fe00ff 397px,#ff00df 427px,#ff00c4 457px)"></i><i style="top:294px;height:2px;background:linear-gradient(90deg,#002dff 100px,#0017ff 176px,#5200ff 252px,#fe00ff 399px,#ff00e1 427px,#ff00c8 455px)"></i><i style="top:296px;height:2px;background:linear-gradient(90deg,#002cff 101px,#0116ff 177px,#4f00ff 250px,#fe00ff 401px,#ff00cb 453px)"></i><i style="top:298px;height:2px;background:linear-gradient(90deg,#002aff 103px,#0015ff 177px,#4c00ff 248px,#a400ff 327px,#fe00ff 403px,#ff00cf 451px)"></i><i style="top:300px;height:2px;background:linear-gradient(90deg,#0029ff 104px,#0014ff 177px,#4900ff 246px,#a200ff 327px,#fe00ff 405px,#ff00d3 449px)"></i><i style="top:302px;height:2px;background:linear-gradient(90deg,#0028ff 105px,#0113ff 178px,#4500ff 244px,#a100ff 327px,#fe00ff 407px,#ff00d7 447px)"></i><i style="top:304px;height:2px;background:linear-gradient(90deg,#0027ff 106px,#0013ff 178px,#4300ff 242px,#9f00ff 327px,#fe00ff 409px,#ff00da 445px)"></i><i style="top:306px;height:2px;background:linear-gradient(90deg,#0025ff 108px,#0012ff 178px,#4100ff 241px,#9e00ff 327px,#fe00ff 411px,#ff00de 443px)"></i><i style="top:308px;height:2px;background:linear-gradient(90deg,#0024ff 109px,#0111ff 179px,#3e00ff 239px,#9c00ff 327px,#fe00ff 413px,#ff00e2 441px)"></i><i style="top:310px;height:2px;background:linear-gradient(90deg,#0023ff 110px,#0010ff 179px,#3b00ff 237px,#9b00ff 327px,#fe00ff 415px,#ff00e6 439px)"></i><i style="top:312px;height:2px;background:linear-gradient(90deg,#02f 111px,#0010ff 179px,#3800ff 235px,#90f 327px,#fe00ff 417px,#ff00ea 437px)"></i><i style="top:314px;height:2px;background:linear-gradient(90deg,#0021ff 113px,#010fff 180px,#3500ff 233px,#90f 328px,#fe00ff 419px,#f0e 435px)"></i><i style="top:316px;height:2px;background:linear-gradient(90deg,#0020ff 114px,#000eff 180px,#30f 231px,#9700ff 328px,#fe00ff 421px,#ff00f3 433px)"></i><i style="top:318px;height:2px;background:linear-gradient(90deg,#001fff 115px,#000dff 180px,#3000ff 229px,#9600ff 328px,#fe00ff 423px,#ff00f7 431px)"></i><i style="top:320px;height:2px;background:linear-gradient(90deg,#001eff 117px,#010dff 181px,#2d00ff 227px,#9400ff 328px,#fe00ff 425px,#ff00fa 430px)"></i><i style="top:322px;height:2px;background:linear-gradient(90deg,#001dff 118px,#000cff 181px,#2b00ff 225px,#9100ff 326px,#f0f 428px)"></i><i style="top:324px;height:2px;background:linear-gradient(90deg,#001cff 119px,#000bff 181px,#2800ff 223px,#8f00ff 326px,#fb00ff 426px)"></i><i style="top:326px;height:2px;background:linear-gradient(90deg,#001aff 121px,#010aff 182px,#2600ff 221px,#8c00ff 324px,#f600ff 424px)"></i><i style="top:328px;height:2px;background:linear-gradient(90deg,#0019ff 122px,#000aff 182px,#2300ff 219px,#8900ff 322px,#f200ff 422px)"></i><i style="top:330px;height:2px;background:linear-gradient(90deg,#0019ff 123px,#0009ff 182px,#2100ff 217px,#8500ff 320px,#e0f 420px)"></i><i style="top:332px;height:2px;background:linear-gradient(90deg,#0017ff 125px,#0108ff 183px,#1e00ff 215px,#8200ff 318px,#ea00ff 418px)"></i><i style="top:334px;height:2px;background:linear-gradient(90deg,#0016ff 126px,#0008ff 183px,#1c00ff 213px,#7f00ff 316px,#e600ff 416px)"></i><i style="top:336px;height:2px;background:linear-gradient(90deg,#0015ff 128px,#0007ff 183px,#1a00ff 211px,#7c00ff 314px,#e200ff 414px)"></i><i style="top:338px;height:2px;background:linear-gradient(90deg,#0014ff 129px,#0106ff 184px,#1700ff 209px,#7900ff 312px,#de00ff 412px)"></i><i style="top:340px;height:2px;background:linear-gradient(90deg,#0014ff 130px,#0006ff 184px,#1500ff 207px,#7600ff 310px,#da00ff 410px)"></i><i style="top:342px;height:2px;background:linear-gradient(90deg,#0012ff 132px,#0005ff 184px,#1300ff 205px,#7300ff 308px,#d600ff 408px)"></i><i style="top:344px;height:2px;background:linear-gradient(90deg,#0012ff 133px,#0105ff 185px,#10f 203px,#7000ff 306px,#d200ff 406px)"></i><i style="top:346px;height:2px;background:linear-gradient(90deg,#0010ff 135px,#0004ff 185px,#0f00ff 202px,#6e00ff 305px,#ce00ff 404px)"></i><i style="top:348px;height:2px;background:linear-gradient(90deg,#0010ff 136px,#0004ff 185px,#0c00ff 199px,#6300ff 295px,#ca00ff 402px)"></i><i style="top:350px;height:2px;background:linear-gradient(90deg,#000fff 137px,#0103ff 186px,#6200ff 295px,#c700ff 400px)"></i><i style="top:352px;height:2px;background:linear-gradient(90deg,#000eff 139px,#0002ff 186px,#6100ff 294px,#c300ff 398px)"></i><i style="top:354px;height:2px;background:linear-gradient(90deg,#000dff 140px,#0002ff 186px,#5f00ff 293px,#c100ff 397px)"></i><i style="top:356px;height:2px;background:linear-gradient(90deg,#000cff 142px,#0101ff 187px,#5e00ff 293px,#bd00ff 395px)"></i><i style="top:358px;height:2px;background:linear-gradient(90deg,#000bff 143px,#0001ff 187px,#5c00ff 292px,#ba00ff 393px)"></i><i style="top:360px;height:2px;background:linear-gradient(90deg,#000aff 145px,#00f 187px,#5a00ff 291px,#b600ff 391px)"></i><i style="top:362px;height:2px;background:linear-gradient(90deg,#0009ff 146px,#00f 187px,#5800ff 289px,#b300ff 389px)"></i><i style="top:364px;height:2px;background:linear-gradient(90deg,#0008ff 148px,#00f 188px,#5700ff 289px,#b000ff 387px)"></i><i style="top:366px;height:2px;background:linear-gradient(90deg,#0008ff 149px,#00f 188px,#ac00ff 385px)"></i><i style="top:368px;height:2px;background:linear-gradient(90deg,#0007ff 151px,#00f 188px,#a900ff 383px)"></i><i style="top:370px;height:2px;background:linear-gradient(90deg,#0006ff 152px,#00f 189px,#a600ff 381px)"></i><i style="top:372px;height:2px;background:linear-gradient(90deg,#0005ff 154px,#00f 189px,#a300ff 379px)"></i><i style="top:374px;height:2px;background:linear-gradient(90deg,#0004ff 156px,#00f 189px,#a000ff 377px)"></i><i style="top:376px;height:2px;background:linear-gradient(90deg,#0003ff 157px,#0100ff 190px,#9d00ff 375px)"></i><i style="top:378px;height:2px;background:linear-gradient(90deg,#0002ff 159px,#00f 190px,#9a00ff 373px)"></i><i style="top:380px;height:2px;background:linear-gradient(90deg,#0002ff 160px,#00f 190px,#9700ff 371px)"></i><i style="top:382px;height:2px;background:linear-gradient(90deg,#0001ff 162px,#0100ff 191px,#9400ff 369px)"></i><i style="top:384px;height:2px;background:linear-gradient(90deg,#00f 164px,#00f 191px,#9100ff 367px)"></i><i style="top:386px;height:2px;background:linear-gradient(90deg,#00f 165px,#00f 191px,#8f00ff 366px)"></i><i style="top:388px;height:2px;background:linear-gradient(90deg,#00f 167px,#0100ff 192px,#8c00ff 364px)"></i><i style="top:390px;height:2px;background:linear-gradient(90deg,#00f 169px,#00f 192px,#8900ff 362px)"></i><i style="top:392px;height:2px;background:linear-gradient(90deg,#00f 170px,#00f 192px,#8700ff 360px)"></i><i style="top:394px;height:2px;background:linear-gradient(90deg,#00f 172px,#0100ff 193px,#8400ff 358px)"></i><i style="top:396px;height:2px;background:linear-gradient(90deg,#00f 174px,#00f 193px,#8100ff 356px)"></i><i style="top:398px;height:2px;background:linear-gradient(90deg,#00f 176px,#00f 193px,#7f00ff 354px)"></i><i style="top:400px;height:2px;background:linear-gradient(90deg,#00f 177px,#0100ff 194px,#7c00ff 352px)"></i><i style="top:402px;height:2px;background:linear-gradient(90deg,#00f 179px,#00f 194px,#7a00ff 350px)"></i><i style="top:404px;height:2px;background:linear-gradient(90deg,#00f 181px,#00f 194px,#70f 348px)"></i><i style="top:406px;height:2px;background:linear-gradient(90deg,#00f 183px,#0100ff 195px,#7400ff 346px)"></i><i style="top:408px;height:2px;background:linear-gradient(90deg,#00f 185px,#00f 195px,#7200ff 344px)"></i><i style="top:410px;height:2px;background:linear-gradient(90deg,#00f 187px,#00f 195px,#7000ff 342px)"></i><i style="top:412px;height:2px;background:linear-gradient(90deg,#00f 189px,#0100ff 196px,#6d00ff 340px)"></i><i style="top:414px;height:2px;background:linear-gradient(90deg,#00f 191px,#0700ff 205px,#6b00ff 338px)"></i><i style="top:416px;height:2px;background:linear-gradient(90deg,#00f 193px,#6800ff 336px)"></i><i style="top:418px;height:2px;background:linear-gradient(90deg,#00f 195px,#6700ff 335px)"></i><i style="top:420px;height:2px;background:linear-gradient(90deg,#00f 197px,#6400ff 333px)"></i><i style="top:422px;height:2px;background:linear-gradient(90deg,#0200ff 199px,#6200ff 331px)"></i><i style="top:424px;height:2px;background:linear-gradient(90deg,#0300ff 201px,#6000ff 329px)"></i><i style="top:426px;height:2px;background:linear-gradient(90deg,#0400ff 203px,#5e00ff 327px)"></i><i style="top:428px;height:2px;background:linear-gradient(90deg,#0600ff 206px,#5b00ff 325px)"></i><i style="top:430px;height:2px;background:linear-gradient(90deg,#0700ff 208px,#5900ff 323px)"></i><i style="top:432px;height:2px;background:linear-gradient(90deg,#0800ff 210px,#5700ff 321px)"></i><i style="top:434px;height:2px;background:linear-gradient(90deg,#0a00ff 213px,#50f 319px)"></i><i style="top:436px;height:2px;background:linear-gradient(90deg,#0b00ff 215px,#5300ff 317px)"></i><i style="top:438px;height:2px;background:linear-gradient(90deg,#0c00ff 217px,#5100ff 315px)"></i><i style="top:440px;height:2px;background:linear-gradient(90deg,#0e00ff 220px,#4f00ff 313px)"></i><i style="top:442px;height:2px;background:linear-gradient(90deg,#0f00ff 222px,#4d00ff 311px)"></i><i style="top:444px;height:2px;background:linear-gradient(90deg,#1000ff 224px,#4b00ff 309px)"></i><i style="top:446px;height:2px;background:linear-gradient(90deg,#1200ff 227px,#4900ff 307px)"></i><i style="top:448px;height:2px;background:linear-gradient(90deg,#1300ff 229px,#4700ff 305px)"></i><i style="top:450px;height:2px;background:linear-gradient(90deg,#1400ff 232px,#4500ff 304px)"></i><i style="top:452px;height:2px;background:linear-gradient(90deg,#1500ff 234px,#40f 302px)"></i><i style="top:454px;height:2px;background:linear-gradient(90deg,#1600ff 236px,#4200ff 300px)"></i><i style="top:456px;height:2px;background:linear-gradient(90deg,#1800ff 239px,#4000ff 298px)"></i><i style="top:458px;height:2px;background:linear-gradient(90deg,#1900ff 241px,#3e00ff 296px)"></i><i style="top:460px;height:2px;background:linear-gradient(90deg,#1b00ff 244px,#3c00ff 294px)"></i><i style="top:462px;height:2px;background:linear-gradient(90deg,#1c00ff 246px,#3a00ff 292px)"></i><i style="top:464px;height:2px;background:linear-gradient(90deg,#1d00ff 248px,#3800ff 290px)"></i><i style="top:466px;height:2px;background:linear-gradient(90deg,#1e00ff 251px,#3700ff 288px)"></i><i style="top:468px;height:2px;background:linear-gradient(90deg,#1f00ff 253px,#3500ff 286px)"></i><i style="top:470px;height:2px;background:linear-gradient(90deg,#2100ff 256px,#30f 284px)"></i><i style="top:472px;height:2px;background:linear-gradient(90deg,#20f 258px,#3100ff 282px)"></i><i style="top:474px;height:2px;background:linear-gradient(90deg,#2300ff 261px,#3000ff 280px)"></i><i style="top:476px;height:2px;background:linear-gradient(90deg,#2400ff 263px,#2e00ff 278px)"></i><i style="top:478px;height:2px;background:linear-gradient(90deg,#2600ff 267px,#2c00ff 276px)"></i></div>
<div class="cie" style="left:636px;top:647px;width:342px;height:199px"><i style="top:0px;height:3px;background:linear-gradient(90deg,#86ffcf 0px,#c1ffcc 139px,#ffffc9 271px,#ffdfaf 342px)"></i><i style="top:3px;height:3px;background:linear-gradient(90deg,#87ffd0 0px,#c1ffcd 137px,#ffffcb 268px,#ffdeaf 342px)"></i><i style="top:6px;height:3px;background:linear-gradient(90deg,#88ffd1 0px,#c2ffcf 135px,#ffc 265px,#ffddb0 342px)"></i><i style="top:9px;height:3px;background:linear-gradient(90deg,#89ffd3 0px,#c2ffd0 133px,#ffffce 262px,#ffdbb0 342px)"></i><i style="top:12px;height:3px;background:linear-gradient(90deg,#8affd4 0px,#c3ffd2 132px,#ffffd0 258px,#ffdab0 342px)"></i><i style="top:15px;height:3px;background:linear-gradient(90deg,#8bffd5 0px,#c4ffd3 131px,#ffffd1 255px,#ffd9b0 342px)"></i><i style="top:18px;height:3px;background:linear-gradient(90deg,#8cffd7 0px,#c4ffd5 129px,#ffffd3 252px,#ffd7b1 342px)"></i><i style="top:21px;height:3px;background:linear-gradient(90deg,#8dffd8 0px,#c5ffd6 128px,#ffffd4 249px,#ffd6b1 342px)"></i><i style="top:24px;height:3px;background:linear-gradient(90deg,#8effd9 0px,#c5ffd8 126px,#ffffd6 246px,#ffd5b1 342px)"></i><i style="top:27px;height:3px;background:linear-gradient(90deg,#8fffdb 0px,#c5ffd9 124px,#ffffd7 243px,#ffe8c4 291px,#ffd4b1 342px)"></i><i style="top:30px;height:3px;background:linear-gradient(90deg,#90ffdc 0px,#c6ffdb 123px,#ffffd9 240px,#ffe8c5 289px,#ffd2b2 342px)"></i><i style="top:33px;height:3px;background:linear-gradient(90deg,#91ffde 0px,#c6ffdc 120px,#ffffdb 237px,#ffe7c6 287px,#ffd1b2 342px)"></i><i style="top:36px;height:3px;background:linear-gradient(90deg,#92ffdf 0px,#c7ffde 118px,#ffffdc 234px,#ffe6c6 286px,#ffd0b2 342px)"></i><i style="top:39px;height:3px;background:linear-gradient(90deg,#93ffe1 0px,#c8ffdf 118px,#ffffde 230px,#ffe5c6 286px,#ffceb2 342px)"></i><i style="top:42px;height:3px;background:linear-gradient(90deg,#94ffe2 0px,#c8ffe1 116px,#ffffe0 227px,#ffe4c7 284px,#ffcdb3 342px)"></i><i style="top:45px;height:3px;background:linear-gradient(90deg,#96ffe4 0px,#c9ffe2 115px,#ffffe1 224px,#ffe4c8 282px,#ffccb3 342px)"></i><i style="top:48px;height:3px;background:linear-gradient(90deg,#97ffe5 0px,#caffe4 113px,#ffffe3 221px,#ffe3c9 280px,#ffcbb3 342px)"></i><i style="top:51px;height:3px;background:linear-gradient(90deg,#98ffe7 0px,#caffe6 111px,#ffffe4 218px,#ffe3cb 278px,#ffc9b3 342px)"></i><i style="top:54px;height:3px;background:linear-gradient(90deg,#99ffe8 0px,#cbffe7 110px,#ffffe6 215px,#ffe2cc 276px,#ffc8b4 342px)"></i><i style="top:57px;height:3px;background:linear-gradient(90deg,#9affea 0px,#cbffe9 108px,#ffffe8 212px,#ffe2cd 274px,#ffc7b4 342px)"></i><i style="top:60px;height:3px;background:linear-gradient(90deg,#9bffeb 0px,#ccffea 106px,#ffffe9 209px,#ffe1ce 272px,#ffc6b4 342px)"></i><i style="top:63px;height:3px;background:linear-gradient(90deg,#9cffed 0px,#ccffec 103px,#ffffeb 206px,#ffe0ce 271px,#ffc4b4 342px)"></i><i style="top:66px;height:3px;background:linear-gradient(90deg,#9dffee 0px,#cfe 101px,#ffffed 203px,#ffe0cf 269px,#ffc3b5 342px)"></i><i style="top:69px;height:3px;background:linear-gradient(90deg,#9efff0 0px,#ceffef 102px,#ffffef 199px,#ffdfd0 268px,#ffc2b5 342px)"></i><i style="top:72px;height:3px;background:linear-gradient(90deg,#a0fff1 0px,#cefff1 100px,#fffff0 196px,#ffded1 266px,#ffc1b5 342px)"></i><i style="top:75px;height:3px;background:linear-gradient(90deg,#a1fff3 0px,#cffff2 98px,#fffff2 193px,#ffddd2 264px,#ffc0b5 342px)"></i><i style="top:78px;height:3px;background:linear-gradient(90deg,#a2fff4 0px,#cffff4 97px,#fffff4 190px,#ffddd3 262px,#ffbeb6 342px)"></i><i style="top:81px;height:3px;background:linear-gradient(90deg,#a3fff6 0px,#d0fff6 95px,#fffff6 187px,#ffdcd4 260px,#ffbdb6 342px)"></i><i style="top:84px;height:3px;background:linear-gradient(90deg,#a4fff8 0px,#d0fff8 93px,#fffff7 184px,#ffdcd5 258px,#ffbcb6 342px)"></i><i style="top:87px;height:3px;background:linear-gradient(90deg,#a5fff9 0px,#d1fff9 91px,#fffff9 181px,#ffdbd6 257px,#ffbbb6 342px)"></i><i style="top:90px;height:3px;background:linear-gradient(90deg,#a7fffb 0px,#d1fffb 88px,#fffffb 178px,#ffdad7 255px,#ffbab7 342px)"></i><i style="top:93px;height:3px;background:linear-gradient(90deg,#a8fffd 0px,#d1fffd 86px,#fffffc 175px,#ffdad8 253px,#ffb8b7 342px)"></i><i style="top:96px;height:3px;background:linear-gradient(90deg,#a9fffe 0px,#d3fffe 87px,#fffffe 171px,#ffd9d8 252px,#ffb7b7 342px)"></i><i style="top:99px;height:3px;background:linear-gradient(90deg,#aafeff 0px,#fffeff 171px,#ffd8d9 251px,#ffb6b7 342px)"></i><i style="top:102px;height:3px;background:linear-gradient(90deg,#aafcff 0px,#d3fcff 86px,#fffcff 171px,#ffd6d9 251px,#ffb5b7 342px)"></i><i style="top:105px;height:3px;background:linear-gradient(90deg,#aafbff 0px,#d4faff 87px,#fffaff 171px,#ffd4d9 252px,#ffb4b8 342px)"></i><i style="top:108px;height:3px;background:linear-gradient(90deg,#aaf9ff 0px,#d4f9ff 87px,#fff8ff 171px,#ffd3d9 252px,#ffb3b8 342px)"></i><i style="top:111px;height:3px;background:linear-gradient(90deg,#aaf7ff 0px,#fff6ff 172px,#ffd2d9 252px,#ffb1b8 342px)"></i><i style="top:114px;height:3px;background:linear-gradient(90deg,#aaf6ff 0px,#d4f5ff 87px,#fff5ff 172px,#ffd0d9 252px,#ffb0b8 342px)"></i><i style="top:117px;height:3px;background:linear-gradient(90deg,#aaf4ff 0px,#d4f4ff 88px,#fff3ff 172px,#ffcfda 252px,#ffafb9 342px)"></i><i style="top:120px;height:3px;background:linear-gradient(90deg,#aaf2ff 0px,#d4f2ff 88px,#fff1ff 172px,#ffcdd9 253px,#ffaeb9 342px)"></i><i style="top:123px;height:3px;background:linear-gradient(90deg,#aaf1ff 0px,#ffefff 173px,#ffccda 252px,#ffadb9 342px)"></i><i style="top:126px;height:3px;background:linear-gradient(90deg,#abefff 0px,#fef 173px,#ffcbda 252px,#ffacb9 342px)"></i><i style="top:129px;height:3px;background:linear-gradient(90deg,#abeeff 0px,#d4edff 88px,#ffecff 173px,#ffc9da 253px,#ffabba 342px)"></i><i style="top:132px;height:3px;background:linear-gradient(90deg,#abecff 0px,#d4ebff 88px,#ffeaff 173px,#ffc8da 253px,#ffa9ba 342px)"></i><i style="top:135px;height:3px;background:linear-gradient(90deg,#abeaff 0px,#ffe9ff 174px,#ffc7da 253px,#ffa8ba 342px)"></i><i style="top:138px;height:3px;background:linear-gradient(90deg,#abe9ff 0px,#ffe7ff 174px,#ffc5da 253px,#ffa7ba 342px)"></i><i style="top:141px;height:3px;background:linear-gradient(90deg,#abe7ff 0px,#d4e6ff 89px,#ffe5ff 174px,#ffc4db 253px,#ffa6ba 342px)"></i><i style="top:144px;height:3px;background:linear-gradient(90deg,#abe6ff 0px,#d4e5ff 89px,#ffe4ff 174px,#ffc2da 254px,#ffa5bb 342px)"></i><i style="top:147px;height:3px;background:linear-gradient(90deg,#abe4ff 0px,#ffe2ff 175px,#ffc1db 254px,#ffa4bb 342px)"></i><i style="top:150px;height:3px;background:linear-gradient(90deg,#abe3ff 0px,#ffe0ff 175px,#ffc0db 254px,#ffa3bb 342px)"></i><i style="top:153px;height:3px;background:linear-gradient(90deg,#abe1ff 0px,#ffdfff 175px,#ffbedb 254px,#ffa2bb 342px)"></i><i style="top:156px;height:3px;background:linear-gradient(90deg,#ace0ff 0px,#fdf 175px,#ffbddb 254px,#ffa1bc 342px)"></i><i style="top:159px;height:3px;background:linear-gradient(90deg,#acdeff 0px,#ffdbff 176px,#ffbcdb 254px,#ffa0bc 342px)"></i><i style="top:162px;height:3px;background:linear-gradient(90deg,#acddff 0px,#ffdaff 176px,#ffbadc 254px,#ff9ebc 342px)"></i><i style="top:165px;height:3px;background:linear-gradient(90deg,#acdbff 0px,#ffd8ff 176px,#ffb9dc 254px,#ff9dbc 342px)"></i><i style="top:168px;height:3px;background:linear-gradient(90deg,#acdaff 0px,#ffd7ff 176px,#ffb8dc 255px,#ff9cbc 342px)"></i><i style="top:171px;height:3px;background:linear-gradient(90deg,#acd8ff 0px,#ffd5ff 176px,#ffb6db 256px,#ff9bbd 342px)"></i><i style="top:174px;height:3px;background:linear-gradient(90deg,#acd7ff 0px,#ffd3ff 177px,#ffb5dc 255px,#ff9abd 342px)"></i><i style="top:177px;height:3px;background:linear-gradient(90deg,#acd5ff 0px,#ffd2ff 177px,#ffb4dc 255px,#ff99bd 342px)"></i><i style="top:180px;height:3px;background:linear-gradient(90deg,#acd4ff 0px,#ffd0ff 177px,#ffb3dc 255px,#ff98bd 342px)"></i><i style="top:183px;height:3px;background:linear-gradient(90deg,#acd2ff 0px,#ffcfff 177px,#ffb1dc 256px,#ff97bd 342px)"></i><i style="top:186px;height:3px;background:linear-gradient(90deg,#add1ff 0px,#ffcdff 178px,#ffb0dd 255px,#ff96be 342px)"></i><i style="top:189px;height:3px;background:linear-gradient(90deg,#adcfff 0px,#fcf 178px,#ffafdd 255px,#ff95be 342px)"></i><i style="top:192px;height:3px;background:linear-gradient(90deg,#adceff 0px,#ffcaff 178px,#ffaddd 256px,#ff94be 342px)"></i><i style="top:195px;height:3px;background:linear-gradient(90deg,#adcdff 0px,#ffc9ff 178px,#ffacdc 257px,#ff93be 342px)"></i><i style="top:198px;height:1px;background:linear-gradient(90deg,#adcbff 0px,#ffc7ff 179px,#ffabdd 256px,#ff92bf 342px)"></i></div><svg class="o" width="1655" height="942" viewBox="0 0 1655 942"><defs><linearGradient id="g1" x1="0" y1="0" x2="0" y2="1"><stop offset="0" stop-color="#4c4c4c"/><stop offset="1" stop-color="#3a3a3a"/></linearGradient><linearGradient id="g2" x1="0" y1="0" x2="0" y2="1"><stop offset="0" stop-color="#363636"/><stop offset="1" stop-color="#505050"/></linearGradient><linearGradient id="g3" x1="0" y1="0" x2="0" y2="1"><stop offset="0" stop-color="#7c7c7c"/><stop offset="0.05" stop-color="#5a5a5a"/><stop offset="1" stop-color="#717171"/></linearGradient><linearGradient id="g4" x1="0" y1="0" x2="0" y2="1"><stop offset="0" stop-color="#464646"/><stop offset="1" stop-color="#6e6e6e"/></linearGradient><linearGradient id="g5" x1="0" y1="0" x2="0" y2="1"><stop offset="0" stop-color="#7c7c7c"/><stop offset="0.05" stop-color="#5a5a5a"/><stop offset="1" stop-color="#717171"/></linearGradient><linearGradient id="g6" x1="0" y1="0" x2="0" y2="1"><stop offset="0" stop-color="#464646"/><stop offset="1" stop-color="#6e6e6e"/></linearGradient><linearGradient id="g7" x1="0" y1="0" x2="0" y2="1"><stop offset="0" stop-color="#7c7c7c"/><stop offset="0.05" stop-color="#5a5a5a"/><stop offset="1" stop-color="#717171"/></linearGradient><linearGradient id="g8" x1="0" y1="0" x2="0" y2="1"><stop offset="0" stop-color="#464646"/><stop offset="1" stop-color="#6e6e6e"/></linearGradient><linearGradient id="g9" x1="0" y1="0" x2="0" y2="1"><stop offset="0" stop-color="#8c8c8c"/><stop offset="1" stop-color="#585858"/></linearGradient><linearGradient id="g10" x1="0" y1="0" x2="0" y2="1"><stop offset="0" stop-color="#585858"/><stop offset="1" stop-color="#8a8a8a"/></linearGradient><linearGradient id="g11" x1="0" y1="0" x2="0" y2="1"><stop offset="0" stop-color="#585858"/><stop offset="1" stop-color="#8a8a8a"/></linearGradient><linearGradient id="g12" x1="0" y1="0" x2="1" y2="0"><stop offset="0" stop-color="#ffffff"/><stop offset="0.42" stop-color="#ffffff"/><stop offset="0.7" stop-color="#d8d8d8"/><stop offset="0.9" stop-color="#9a9a9a"/><stop offset="1" stop-color="#707070"/></linearGradient><linearGradient id="g13" x1="0" y1="0" x2="1" y2="0"><stop offset="0" stop-color="#d8d860"/><stop offset="0.06" stop-color="#d0d030"/><stop offset="0.22" stop-color="#c8c800"/><stop offset="0.5" stop-color="#c0c000"/><stop offset="0.8" stop-color="#8e8e00"/><stop offset="1" stop-color="#5e5e00"/></linearGradient><linearGradient id="g14" x1="0" y1="0" x2="1" y2="0"><stop offset="0" stop-color="#e060e0"/><stop offset="0.05" stop-color="#d030d0"/><stop offset="0.2" stop-color="#c400c4"/><stop offset="0.55" stop-color="#b800b8"/><stop offset="0.8" stop-color="#8c008c"/><stop offset="1" stop-color="#560056"/></linearGradient><linearGradient id="g15" x1="0" y1="0" x2="1" y2="0"><stop offset="0" stop-color="#60e0e0"/><stop offset="0.05" stop-color="#30d0d0"/><stop offset="0.2" stop-color="#00c4c4"/><stop offset="0.55" stop-color="#08b8b8"/><stop offset="0.8" stop-color="#088c8c"/><stop offset="1" stop-color="#005050"/></linearGradient><linearGradient id="g16" x1="0" y1="0" x2="1" y2="0"><stop offset="0" stop-color="#5050e0"/><stop offset="0.06" stop-color="#2828d0"/><stop offset="0.22" stop-color="#0000c4"/><stop offset="0.55" stop-color="#0808b8"/><stop offset="0.8" stop-color="#06068a"/><stop offset="1" stop-color="#000056"/></linearGradient><linearGradient id="g17" x1="0" y1="0" x2="1" y2="0"><stop offset="0" stop-color="#50e050"/><stop offset="0.05" stop-color="#28d028"/><stop offset="0.2" stop-color="#00c400"/><stop offset="0.55" stop-color="#08b808"/><stop offset="0.8" stop-color="#068c06"/><stop offset="1" stop-color="#005600"/></linearGradient><linearGradient id="g18" x1="0" y1="0" x2="1" y2="0"><stop offset="0" stop-color="#e05050"/><stop offset="0.05" stop-color="#d02828"/><stop offset="0.2" stop-color="#c40000"/><stop offset="0.55" stop-color="#b80808"/><stop offset="0.8" stop-color="#8a0606"/><stop offset="1" stop-color="#500000"/></linearGradient><linearGradient id="g19" x1="0" y1="0" x2="1" y2="0"><stop offset="0" stop-color="#e0e0e0"/><stop offset="0.1" stop-color="#d0d0d0"/><stop offset="0.4" stop-color="#c0c0c0"/><stop offset="0.7" stop-color="#a0a0a0"/><stop offset="0.9" stop-color="#787878"/><stop offset="1" stop-color="#585858"/></linearGradient><linearGradient id="g20" x1="0" y1="0" x2="0" y2="1"><stop offset="0" stop-color="#ffffff"/><stop offset="0.45" stop-color="#ffffff"/><stop offset="0.7" stop-color="#d0d0d0"/><stop offset="0.9" stop-color="#8a8a8a"/><stop offset="1" stop-color="#5a5a5a"/></linearGradient><clipPath id="cpl"><rect x="1018" y="90" width="640" height="491"/></clipPath><linearGradient id="g21" x1="0" y1="0" x2="0" y2="1"><stop offset="0" stop-color="#ff5a5a"/><stop offset="1" stop-color="#ff5050"/></linearGradient><linearGradient id="g22" x1="0" y1="0" x2="0" y2="1"><stop offset="0" stop-color="#5aad5a"/><stop offset="1" stop-color="#3c983c"/></linearGradient><linearGradient id="g23" x1="0" y1="0" x2="0" y2="1"><stop offset="0" stop-color="#5c5cff"/><stop offset="1" stop-color="#3030ff"/></linearGradient><linearGradient id="g24" x1="0" y1="0" x2="0" y2="1"><stop offset="0" stop-color="#323232"/><stop offset="0.5" stop-color="#2f2f2f"/><stop offset="0.53" stop-color="#1c1c1c"/><stop offset="1" stop-color="#141414"/></linearGradient><clipPath id="cpt"><rect x="995" y="633" width="633.5" height="200"/></clipPath><linearGradient id="g25" x1="0" y1="0" x2="0" y2="1"><stop offset="0" stop-color="#b4b4b4"/><stop offset="0.04" stop-color="#9e9e9e"/><stop offset="0.5" stop-color="#868686"/><stop offset="1" stop-color="#6c6c6c"/></linearGradient><linearGradient id="g26" x1="0" y1="0" x2="0" y2="1"><stop offset="0" stop-color="#1c1c1c"/><stop offset="0.15" stop-color="#222222"/><stop offset="1" stop-color="#393939"/></linearGradient><linearGradient id="g27" x1="0" y1="0" x2="0" y2="1"><stop offset="0" stop-color="#b0b0b0"/><stop offset="0.3" stop-color="#929292"/><stop offset="0.32" stop-color="#9c9c9c"/><stop offset="1" stop-color="#6a6a6a"/></linearGradient><linearGradient id="g28" x1="0" y1="0" x2="0" y2="1"><stop offset="0" stop-color="#707070"/><stop offset="1" stop-color="#b0b0b0"/></linearGradient><linearGradient id="g29" x1="0" y1="0" x2="0" y2="1"><stop offset="0" stop-color="#d2d2d2"/><stop offset="0.49" stop-color="#a8a8a8"/><stop offset="0.51" stop-color="#7c7c7c"/><stop offset="1" stop-color="#8a8a8a"/></linearGradient><linearGradient id="g30" x1="0" y1="0" x2="0" y2="1"><stop offset="0" stop-color="#b4b4b4"/><stop offset="0.04" stop-color="#aaaaaa"/><stop offset="1" stop-color="#747474"/></linearGradient><linearGradient id="g31" x1="0" y1="0" x2="0" y2="1"><stop offset="0" stop-color="#707070"/><stop offset="1" stop-color="#b0b0b0"/></linearGradient><linearGradient id="g32" x1="0" y1="0" x2="0" y2="1"><stop offset="0" stop-color="#707070"/><stop offset="1" stop-color="#b0b0b0"/></linearGradient><linearGradient id="g33" x1="0" y1="0" x2="0" y2="1"><stop offset="0" stop-color="#707070"/><stop offset="1" stop-color="#b0b0b0"/></linearGradient><linearGradient id="g34" x1="0" y1="0" x2="0" y2="1"><stop offset="0" stop-color="#707070"/><stop offset="1" stop-color="#b0b0b0"/></linearGradient><linearGradient id="g35" x1="0" y1="0" x2="0" y2="1"><stop offset="0" stop-color="#707070"/><stop offset="1" stop-color="#b0b0b0"/></linearGradient><linearGradient id="g36" x1="0" y1="0" x2="0" y2="1"><stop offset="0" stop-color="#b6b6b6"/><stop offset="0.06" stop-color="#aaaaaa"/><stop offset="1" stop-color="#858585"/></linearGradient><linearGradient id="g37" x1="0" y1="0" x2="0" y2="1"><stop offset="0" stop-color="#707070"/><stop offset="1" stop-color="#b0b0b0"/></linearGradient><linearGradient id="g38" x1="0" y1="0" x2="0" y2="1"><stop offset="0" stop-color="#707070"/><stop offset="1" stop-color="#b0b0b0"/></linearGradient></defs><rect x="0.00" y="0.00" width="1655.00" height="38.60" fill="#222222"/>
<path d="M0 37V4Q0 0.5 4 0.5H109Q113.7 0.5 113.7 5V37Z" fill="url(#g1)"/>
<path d="M0 4.5Q0.5 0.6 4 0.6H109Q113.2 0.6 113.2 5V37" fill="none" stroke="#8a8a8a" stroke-width="1"/>
<line x1="72.30" y1="1.00" x2="72.30" y2="37.00" stroke="#7c7c7c" stroke-width="1.00"/>
<circle cx="91.5" cy="21.3" r="11.8" fill="url(#g2)"/>
<line x1="87.70" y1="22.70" x2="95.30" y2="22.70" stroke="#9a9a9a" stroke-width="1.10"/>
<line x1="91.50" y1="18.90" x2="91.50" y2="26.50" stroke="#9a9a9a" stroke-width="1.10"/>
<text x="7.2" y="25.5" font-size="15.3" fill="#f0f0f0" textLength="58.0" lengthAdjust="spacingAndGlyphs" stroke="#f0f0f0" stroke-width="0.22">History 1</text>
<path d="M1054.0 37V4Q1054.0 0 1058.0 0H1228.0Q1232.0 0 1232.0 4V37Z" fill="url(#g3)"/>
<path d="M1054.0 37V4Q1054.0 0 1058.0 0H1061.5V37Z" fill="#17d017"/>
<text x="1065.2" y="14.0" font-size="13.4" fill="#f4f4f4" textLength="81.5" lengthAdjust="spacingAndGlyphs" stroke="#f4f4f4" stroke-width="0.25">X-Rite i1Pro 3</text>
<text x="1065.2" y="32.8" font-size="13.4" fill="#f4f4f4" textLength="69.0" lengthAdjust="spacingAndGlyphs" stroke="#f4f4f4" stroke-width="0.25">Direct View</text>
<circle cx="1163.4" cy="18.3" r="11.8" fill="url(#g4)"/>
<path d="M1157.2 16.9h12.4l-6.2 6.6z" fill="#fff"/>
<line x1="1187.50" y1="3.00" x2="1187.50" y2="37.00" stroke="#484848" stroke-width="1.00"/>
<line x1="1188.50" y1="3.00" x2="1188.50" y2="37.00" stroke="#7a7a7a" stroke-width="1.00"/>
<circle cx="1213.6" cy="18.4" r="15.6" fill="#0000e6" stroke="#fff" stroke-width="1.2"/>
<text x="1203.8" y="22.9" font-size="12.8" fill="#fff" textLength="19.5" lengthAdjust="spacingAndGlyphs" stroke="#fff" stroke-width="0.3">701</text>
<path d="M1240.0 37V4Q1240.0 0 1244.0 0H1398.0Q1402.0 0 1402.0 4V37Z" fill="url(#g5)"/>
<path d="M1240.0 37V4Q1240.0 0 1244.0 0H1247.5V37Z" fill="#17d017"/>
<text x="1251.6" y="14.0" font-size="13.4" fill="#f4f4f4" textLength="79.4" lengthAdjust="spacingAndGlyphs" stroke="#f4f4f4" stroke-width="0.25">Mobile Forge</text>
<circle cx="1381.9" cy="18.3" r="11.8" fill="url(#g6)"/>
<path d="M1375.7 16.9h12.4l-6.2 6.6z" fill="#fff"/>
<path d="M1409.6 37V4Q1409.6 0 1413.6 0H1585.0Q1589.0 0 1589.0 4V37Z" fill="url(#g7)"/>
<path d="M1409.6 37V4Q1409.6 0 1413.6 0H1417.1V37Z" fill="#e8e800"/>
<text x="1421.4" y="14.0" font-size="13.4" fill="#f4f4f4" textLength="131.0" lengthAdjust="spacingAndGlyphs" stroke="#f4f4f4" stroke-width="0.25">Direct Display Control</text>
<circle cx="1569.0" cy="18.3" r="11.8" fill="url(#g8)"/>
<path d="M1562.8 16.9h12.4l-6.2 6.6z" fill="#fff"/>
<rect x="1593.3" y="1" width="41.4" height="33.6" rx="4.5" fill="url(#g9)" stroke="#cfcfcf" stroke-width="1.3"/>
<circle cx="1613.9" cy="17.6" r="12.1" fill="url(#g10)"/>
<path d="M1614.99 25.93 L1612.81 25.93 L1612.47 23.43 L1610.79 22.73 L1608.78 24.26 L1607.24 22.72 L1608.77 20.71 L1608.07 19.03 L1605.57 18.69 L1605.57 16.51 L1608.07 16.17 L1608.77 14.49 L1607.24 12.48 L1608.78 10.94 L1610.79 12.47 L1612.47 11.77 L1612.81 9.27 L1614.99 9.27 L1615.33 11.77 L1617.01 12.47 L1619.02 10.94 L1620.56 12.48 L1619.03 14.49 L1619.73 16.17 L1622.23 16.51 L1622.23 18.69 L1619.73 19.03 L1619.03 20.71 L1620.56 22.72 L1619.02 24.26 L1617.01 22.73 L1615.33 23.43 Z M1613.90 13.60 a4 4 0 1 0 0.01 0Z" fill="#dcdcdc" fill-rule="evenodd"/>
<rect x="1636.5" y="1" width="30" height="33.6" rx="4.5" fill="url(#g9)" stroke="#cfcfcf" stroke-width="1.3"/>
<circle cx="1657" cy="17.6" r="12.1" fill="url(#g11)"/>
<path d="M1648.8 17.6l7.5-7v14z" fill="#fff"/>
<rect x="0.00" y="38.60" width="1.00" height="831.00" fill="#2b2b2b"/>
<text x="24.0" y="102.5" font-size="40.2" fill="#f4f4f4" textLength="223.0" lengthAdjust="spacingAndGlyphs" stroke="#f4f4f4" stroke-width="0.22">Color Gamut</text>
<text x="14.7" y="683.0" font-size="30.1" fill="#f4f4f4" textLength="218.5" lengthAdjust="spacingAndGlyphs" stroke="#f4f4f4" stroke-width="0.22">Current Reading</text>
<text x="14.0" y="752.5" font-size="24.8" fill="#f4f4f4" textLength="103.0" lengthAdjust="spacingAndGlyphs" stroke="#f4f4f4" stroke-width="0.22">x: 0,3006</text>
<text x="170.7" y="752.5" font-size="24.8" fill="#f4f4f4" textLength="103.0" lengthAdjust="spacingAndGlyphs" stroke="#f4f4f4" stroke-width="0.22">y: 0,3229</text>
<text x="14.3" y="793.6" font-size="24.8" fill="#f4f4f4" textLength="110.0" lengthAdjust="spacingAndGlyphs" stroke="#f4f4f4" stroke-width="0.22">fL: 138,93</text>
<text x="14.4" y="833.7" font-size="24.8" fill="#f4f4f4" textLength="124.0" lengthAdjust="spacingAndGlyphs" stroke="#f4f4f4" stroke-width="0.22">cd/m²: 476</text>
<rect x="20.00" y="158.70" width="335.30" height="413.10" fill="#242424"/>
<line x1="63.40" y1="158.70" x2="63.40" y2="571.80" stroke="#949494" stroke-width="1.60"/>
<line x1="108.30" y1="158.70" x2="108.30" y2="571.80" stroke="#949494" stroke-width="1.60"/>
<line x1="153.10" y1="158.70" x2="153.10" y2="571.80" stroke="#949494" stroke-width="1.60"/>
<line x1="198.70" y1="158.70" x2="198.70" y2="571.80" stroke="#949494" stroke-width="1.60"/>
<line x1="243.50" y1="158.70" x2="243.50" y2="571.80" stroke="#949494" stroke-width="1.60"/>
<line x1="286.60" y1="158.70" x2="286.60" y2="571.80" stroke="#949494" stroke-width="1.60"/>
<line x1="331.40" y1="158.70" x2="331.40" y2="571.80" stroke="#949494" stroke-width="1.60"/>
<rect x="20.3" y="164.5" width="132.5" height="38.2" fill="url(#g12)" stroke="#000" stroke-width="1.2"/>
<rect x="20.3" y="216.2" width="98.7" height="38.4" fill="url(#g13)" stroke="#000" stroke-width="1.2"/>
<rect x="20.3" y="267.6" width="221.7" height="39.2" fill="url(#g14)" stroke="#000" stroke-width="1.2"/>
<rect x="20.3" y="319.6" width="208.7" height="38.9" fill="url(#g15)" stroke="#000" stroke-width="1.2"/>
<rect x="20.3" y="370.8" width="159.0" height="39.4" fill="url(#g16)" stroke="#000" stroke-width="1.2"/>
<rect x="20.3" y="423.2" width="212.8" height="38.7" fill="url(#g17)" stroke="#000" stroke-width="1.2"/>
<rect x="20.3" y="474.7" width="191.6" height="39.0" fill="url(#g18)" stroke="#000" stroke-width="1.2"/>
<rect x="20.3" y="526.4" width="103.5" height="39.2" fill="url(#g19)" stroke="#000" stroke-width="1.2"/>
<rect x="20.00" y="158.70" width="335.30" height="413.10" fill="none" stroke="#949494" stroke-width="1.5"/>
<line x1="19.60" y1="571.80" x2="19.60" y2="577.00" stroke="#c8c8c8" stroke-width="1.40"/>
<text x="15.6" y="593.9" font-size="14.1" fill="#d0d0d0" textLength="8.1" lengthAdjust="spacingAndGlyphs" stroke="#d0d0d0" stroke-width="0.22">0</text>
<line x1="63.40" y1="571.80" x2="63.40" y2="577.00" stroke="#c8c8c8" stroke-width="1.40"/>
<text x="59.4" y="593.9" font-size="14.1" fill="#d0d0d0" textLength="8.1" lengthAdjust="spacingAndGlyphs" stroke="#d0d0d0" stroke-width="0.22">2</text>
<line x1="108.30" y1="571.80" x2="108.30" y2="577.00" stroke="#c8c8c8" stroke-width="1.40"/>
<text x="104.3" y="593.9" font-size="14.1" fill="#d0d0d0" textLength="8.1" lengthAdjust="spacingAndGlyphs" stroke="#d0d0d0" stroke-width="0.22">4</text>
<line x1="153.10" y1="571.80" x2="153.10" y2="577.00" stroke="#c8c8c8" stroke-width="1.40"/>
<text x="149.1" y="593.9" font-size="14.1" fill="#d0d0d0" textLength="8.1" lengthAdjust="spacingAndGlyphs" stroke="#d0d0d0" stroke-width="0.22">6</text>
<line x1="198.70" y1="571.80" x2="198.70" y2="577.00" stroke="#c8c8c8" stroke-width="1.40"/>
<text x="194.7" y="593.9" font-size="14.1" fill="#d0d0d0" textLength="8.1" lengthAdjust="spacingAndGlyphs" stroke="#d0d0d0" stroke-width="0.22">8</text>
<line x1="243.50" y1="571.80" x2="243.50" y2="577.00" stroke="#c8c8c8" stroke-width="1.40"/>
<text x="235.4" y="593.9" font-size="14.1" fill="#d0d0d0" textLength="16.2" lengthAdjust="spacingAndGlyphs" stroke="#d0d0d0" stroke-width="0.22">10</text>
<line x1="286.60" y1="571.80" x2="286.60" y2="577.00" stroke="#c8c8c8" stroke-width="1.40"/>
<text x="278.5" y="593.9" font-size="14.1" fill="#d0d0d0" textLength="16.2" lengthAdjust="spacingAndGlyphs" stroke="#d0d0d0" stroke-width="0.22">12</text>
<line x1="331.40" y1="571.80" x2="331.40" y2="577.00" stroke="#c8c8c8" stroke-width="1.40"/>
<text x="323.3" y="593.9" font-size="14.1" fill="#d0d0d0" textLength="16.2" lengthAdjust="spacingAndGlyphs" stroke="#d0d0d0" stroke-width="0.22">14</text>
<text x="148.4" y="153.8" font-size="14.1" fill="#d0d0d0" textLength="78.5" lengthAdjust="spacingAndGlyphs" stroke="#d0d0d0" stroke-width="0.22">DeltaE 2000</text>
<rect x="407.50" y="91.10" width="144.80" height="316.90" fill="#242424"/>
<line x1="402.00" y1="91.10" x2="407.50" y2="91.10" stroke="#d0d0d0" stroke-width="1.60"/>
<text x="384.5" y="96.5" font-size="14.1" fill="#d0d0d0" textLength="16.2" lengthAdjust="spacingAndGlyphs" stroke="#d0d0d0" stroke-width="0.22">15</text>
<line x1="407.50" y1="145.10" x2="552.30" y2="145.10" stroke="#949494" stroke-width="1.60"/>
<line x1="402.00" y1="145.10" x2="407.50" y2="145.10" stroke="#d0d0d0" stroke-width="1.60"/>
<text x="384.5" y="150.5" font-size="14.1" fill="#d0d0d0" textLength="16.2" lengthAdjust="spacingAndGlyphs" stroke="#d0d0d0" stroke-width="0.22">10</text>
<line x1="407.50" y1="197.10" x2="552.30" y2="197.10" stroke="#949494" stroke-width="1.60"/>
<line x1="402.00" y1="197.10" x2="407.50" y2="197.10" stroke="#d0d0d0" stroke-width="1.60"/>
<text x="392.6" y="202.5" font-size="14.1" fill="#d0d0d0" textLength="8.1" lengthAdjust="spacingAndGlyphs" stroke="#d0d0d0" stroke-width="0.22">5</text>
<line x1="407.50" y1="250.10" x2="552.30" y2="250.10" stroke="#949494" stroke-width="1.60"/>
<line x1="402.00" y1="250.10" x2="407.50" y2="250.10" stroke="#d0d0d0" stroke-width="1.60"/>
<text x="392.6" y="255.5" font-size="14.1" fill="#d0d0d0" textLength="8.1" lengthAdjust="spacingAndGlyphs" stroke="#d0d0d0" stroke-width="0.22">0</text>
<line x1="407.50" y1="303.20" x2="552.30" y2="303.20" stroke="#949494" stroke-width="1.60"/>
<line x1="402.00" y1="303.20" x2="407.50" y2="303.20" stroke="#d0d0d0" stroke-width="1.60"/>
<text x="387.8" y="308.6" font-size="14.1" fill="#d0d0d0" textLength="12.9" lengthAdjust="spacingAndGlyphs" stroke="#d0d0d0" stroke-width="0.22">-5</text>
<line x1="407.50" y1="356.20" x2="552.30" y2="356.20" stroke="#949494" stroke-width="1.60"/>
<line x1="402.00" y1="356.20" x2="407.50" y2="356.20" stroke="#d0d0d0" stroke-width="1.60"/>
<text x="379.7" y="361.6" font-size="14.1" fill="#d0d0d0" textLength="21.0" lengthAdjust="spacingAndGlyphs" stroke="#d0d0d0" stroke-width="0.22">-10</text>
<line x1="402.00" y1="408.00" x2="407.50" y2="408.00" stroke="#d0d0d0" stroke-width="1.60"/>
<text x="379.7" y="414.5" font-size="14.1" fill="#d0d0d0" textLength="21.0" lengthAdjust="spacingAndGlyphs" stroke="#d0d0d0" stroke-width="0.22">-15</text>
<rect x="407.50" y="91.10" width="144.80" height="316.90" fill="none" stroke="#949494" stroke-width="1.6"/>
<line x1="407.50" y1="408.00" x2="407.50" y2="414.00" stroke="#c8c8c8" stroke-width="1.40"/>
<line x1="552.30" y1="408.00" x2="552.30" y2="414.00" stroke="#c8c8c8" stroke-width="1.40"/>
<text x="444.5" y="85.6" font-size="14.1" fill="#d0d0d0" textLength="44.4" lengthAdjust="spacingAndGlyphs" stroke="#d0d0d0" stroke-width="0.22">Delta L</text>
<text x="460.8" y="423.6" font-size="13.9" fill="#d0d0d0" textLength="38.1" lengthAdjust="spacingAndGlyphs" stroke="#d0d0d0" stroke-width="0.22">100W</text>
<line x1="422.00" y1="250.20" x2="537.80" y2="250.20" stroke="#1a1a1a" stroke-width="1.60"/>
<rect x="604.50" y="91.10" width="144.90" height="316.90" fill="#242424"/>
<line x1="599.00" y1="91.10" x2="604.50" y2="91.10" stroke="#d0d0d0" stroke-width="1.60"/>
<text x="581.5" y="96.5" font-size="14.1" fill="#d0d0d0" textLength="16.2" lengthAdjust="spacingAndGlyphs" stroke="#d0d0d0" stroke-width="0.22">15</text>
<line x1="604.50" y1="145.10" x2="749.40" y2="145.10" stroke="#949494" stroke-width="1.60"/>
<line x1="599.00" y1="145.10" x2="604.50" y2="145.10" stroke="#d0d0d0" stroke-width="1.60"/>
<text x="581.5" y="150.5" font-size="14.1" fill="#d0d0d0" textLength="16.2" lengthAdjust="spacingAndGlyphs" stroke="#d0d0d0" stroke-width="0.22">10</text>
<line x1="604.50" y1="197.10" x2="749.40" y2="197.10" stroke="#949494" stroke-width="1.60"/>
<line x1="599.00" y1="197.10" x2="604.50" y2="197.10" stroke="#d0d0d0" stroke-width="1.60"/>
<text x="589.6" y="202.5" font-size="14.1" fill="#d0d0d0" textLength="8.1" lengthAdjust="spacingAndGlyphs" stroke="#d0d0d0" stroke-width="0.22">5</text>
<line x1="604.50" y1="250.10" x2="749.40" y2="250.10" stroke="#949494" stroke-width="1.60"/>
<line x1="599.00" y1="250.10" x2="604.50" y2="250.10" stroke="#d0d0d0" stroke-width="1.60"/>
<text x="589.6" y="255.5" font-size="14.1" fill="#d0d0d0" textLength="8.1" lengthAdjust="spacingAndGlyphs" stroke="#d0d0d0" stroke-width="0.22">0</text>
<line x1="604.50" y1="303.20" x2="749.40" y2="303.20" stroke="#949494" stroke-width="1.60"/>
<line x1="599.00" y1="303.20" x2="604.50" y2="303.20" stroke="#d0d0d0" stroke-width="1.60"/>
<text x="584.8" y="308.6" font-size="14.1" fill="#d0d0d0" textLength="12.9" lengthAdjust="spacingAndGlyphs" stroke="#d0d0d0" stroke-width="0.22">-5</text>
<line x1="604.50" y1="356.20" x2="749.40" y2="356.20" stroke="#949494" stroke-width="1.60"/>
<line x1="599.00" y1="356.20" x2="604.50" y2="356.20" stroke="#d0d0d0" stroke-width="1.60"/>
<text x="576.7" y="361.6" font-size="14.1" fill="#d0d0d0" textLength="21.0" lengthAdjust="spacingAndGlyphs" stroke="#d0d0d0" stroke-width="0.22">-10</text>
<line x1="599.00" y1="408.00" x2="604.50" y2="408.00" stroke="#d0d0d0" stroke-width="1.60"/>
<text x="576.7" y="414.5" font-size="14.1" fill="#d0d0d0" textLength="21.0" lengthAdjust="spacingAndGlyphs" stroke="#d0d0d0" stroke-width="0.22">-15</text>
<rect x="604.50" y="91.10" width="144.90" height="316.90" fill="none" stroke="#949494" stroke-width="1.6"/>
<line x1="604.50" y1="408.00" x2="604.50" y2="414.00" stroke="#c8c8c8" stroke-width="1.40"/>
<line x1="749.40" y1="408.00" x2="749.40" y2="414.00" stroke="#c8c8c8" stroke-width="1.40"/>
<text x="640.2" y="85.6" font-size="14.1" fill="#d0d0d0" textLength="47.0" lengthAdjust="spacingAndGlyphs" stroke="#d0d0d0" stroke-width="0.22">Delta C</text>
<text x="657.9" y="423.6" font-size="13.9" fill="#d0d0d0" textLength="38.1" lengthAdjust="spacingAndGlyphs" stroke="#d0d0d0" stroke-width="0.22">100W</text>
<line x1="619.00" y1="250.20" x2="734.90" y2="250.20" stroke="#1a1a1a" stroke-width="1.60"/>
<rect x="802.70" y="91.10" width="144.60" height="316.90" fill="#242424"/>
<line x1="797.20" y1="91.10" x2="802.70" y2="91.10" stroke="#d0d0d0" stroke-width="1.60"/>
<text x="779.7" y="96.5" font-size="14.1" fill="#d0d0d0" textLength="16.2" lengthAdjust="spacingAndGlyphs" stroke="#d0d0d0" stroke-width="0.22">15</text>
<line x1="802.70" y1="145.10" x2="947.30" y2="145.10" stroke="#949494" stroke-width="1.60"/>
<line x1="797.20" y1="145.10" x2="802.70" y2="145.10" stroke="#d0d0d0" stroke-width="1.60"/>
<text x="779.7" y="150.5" font-size="14.1" fill="#d0d0d0" textLength="16.2" lengthAdjust="spacingAndGlyphs" stroke="#d0d0d0" stroke-width="0.22">10</text>
<line x1="802.70" y1="197.10" x2="947.30" y2="197.10" stroke="#949494" stroke-width="1.60"/>
<line x1="797.20" y1="197.10" x2="802.70" y2="197.10" stroke="#d0d0d0" stroke-width="1.60"/>
<text x="787.8" y="202.5" font-size="14.1" fill="#d0d0d0" textLength="8.1" lengthAdjust="spacingAndGlyphs" stroke="#d0d0d0" stroke-width="0.22">5</text>
<line x1="802.70" y1="250.10" x2="947.30" y2="250.10" stroke="#949494" stroke-width="1.60"/>
<line x1="797.20" y1="250.10" x2="802.70" y2="250.10" stroke="#d0d0d0" stroke-width="1.60"/>
<text x="787.8" y="255.5" font-size="14.1" fill="#d0d0d0" textLength="8.1" lengthAdjust="spacingAndGlyphs" stroke="#d0d0d0" stroke-width="0.22">0</text>
<line x1="802.70" y1="303.20" x2="947.30" y2="303.20" stroke="#949494" stroke-width="1.60"/>
<line x1="797.20" y1="303.20" x2="802.70" y2="303.20" stroke="#d0d0d0" stroke-width="1.60"/>
<text x="783.0" y="308.6" font-size="14.1" fill="#d0d0d0" textLength="12.9" lengthAdjust="spacingAndGlyphs" stroke="#d0d0d0" stroke-width="0.22">-5</text>
<line x1="802.70" y1="356.20" x2="947.30" y2="356.20" stroke="#949494" stroke-width="1.60"/>
<line x1="797.20" y1="356.20" x2="802.70" y2="356.20" stroke="#d0d0d0" stroke-width="1.60"/>
<text x="774.9" y="361.6" font-size="14.1" fill="#d0d0d0" textLength="21.0" lengthAdjust="spacingAndGlyphs" stroke="#d0d0d0" stroke-width="0.22">-10</text>
<line x1="797.20" y1="408.00" x2="802.70" y2="408.00" stroke="#d0d0d0" stroke-width="1.60"/>
<text x="774.9" y="414.5" font-size="14.1" fill="#d0d0d0" textLength="21.0" lengthAdjust="spacingAndGlyphs" stroke="#d0d0d0" stroke-width="0.22">-15</text>
<rect x="802.70" y="91.10" width="144.60" height="316.90" fill="none" stroke="#949494" stroke-width="1.6"/>
<line x1="802.70" y1="408.00" x2="802.70" y2="414.00" stroke="#c8c8c8" stroke-width="1.40"/>
<line x1="947.30" y1="408.00" x2="947.30" y2="414.00" stroke="#c8c8c8" stroke-width="1.40"/>
<text x="838.0" y="85.6" font-size="14.1" fill="#d0d0d0" textLength="47.5" lengthAdjust="spacingAndGlyphs" stroke="#d0d0d0" stroke-width="0.22">Delta H</text>
<text x="856.0" y="423.6" font-size="13.9" fill="#d0d0d0" textLength="38.1" lengthAdjust="spacingAndGlyphs" stroke="#d0d0d0" stroke-width="0.22">100W</text>
<line x1="817.20" y1="250.20" x2="932.80" y2="250.20" stroke="#1a1a1a" stroke-width="1.60"/>
<rect x="620.5" y="188.8" width="114" height="61.6" fill="url(#g20)" stroke="#000" stroke-width="1.3"/>
<rect x="375.00" y="440.40" width="592.00" height="163.40" fill="#000"/>
<rect x="392.00" y="448.20" width="62.00" height="131.60" fill="#fff"/>
<rect x="393.20" y="449.40" width="59.60" height="129.20" fill="#c3cad0"/>
<rect x="393.20" y="514.00" width="59.60" height="64.60" fill="#c8c8c8"/>
<rect x="393.7" y="449.9" width="58.6" height="128.2" fill="none" stroke="#000" stroke-opacity="0.18" stroke-width="1"/>
<text x="406.8" y="594.9" font-size="13.0" fill="#fff" textLength="33.2" lengthAdjust="spacingAndGlyphs" stroke="#fff" stroke-width="0.22">White</text>
<rect x="464.00" y="448.20" width="63.00" height="131.60" fill="#fff"/>
<rect x="465.20" y="449.40" width="60.60" height="129.20" fill="#b81c12"/>
<rect x="465.20" y="514.00" width="60.60" height="64.60" fill="#e60000"/>
<rect x="465.7" y="449.9" width="59.6" height="128.2" fill="none" stroke="#000" stroke-opacity="0.18" stroke-width="1"/>
<text x="485.8" y="594.9" font-size="13.0" fill="#fff" textLength="20.3" lengthAdjust="spacingAndGlyphs" stroke="#fff" stroke-width="0.22">Red</text>
<rect x="537.00" y="448.20" width="62.00" height="131.60" fill="#fff"/>
<rect x="538.20" y="449.40" width="59.60" height="129.20" fill="#25d9bb"/>
<rect x="538.20" y="514.00" width="59.60" height="64.60" fill="#00d270"/>
<rect x="538.7" y="449.9" width="58.6" height="128.2" fill="none" stroke="#000" stroke-opacity="0.18" stroke-width="1"/>
<text x="551.8" y="594.9" font-size="13.0" fill="#fff" textLength="33.3" lengthAdjust="spacingAndGlyphs" stroke="#fff" stroke-width="0.22">Green</text>
<rect x="609.00" y="448.20" width="62.20" height="131.60" fill="#fff"/>
<rect x="610.20" y="449.40" width="59.80" height="129.20" fill="#4800d0"/>
<rect x="610.20" y="514.00" width="59.80" height="64.60" fill="#2c38c0"/>
<rect x="610.7" y="449.9" width="58.8" height="128.2" fill="none" stroke="#000" stroke-opacity="0.18" stroke-width="1"/>
<text x="628.4" y="594.9" font-size="13.0" fill="#fff" textLength="24.2" lengthAdjust="spacingAndGlyphs" stroke="#fff" stroke-width="0.22">Blue</text>
<rect x="681.00" y="448.20" width="63.00" height="131.60" fill="#fff"/>
<rect x="682.20" y="449.40" width="60.60" height="129.20" fill="#a5cfc5"/>
<rect x="682.20" y="514.00" width="60.60" height="64.60" fill="#00d2d2"/>
<rect x="682.7" y="449.9" width="59.6" height="128.2" fill="none" stroke="#000" stroke-opacity="0.18" stroke-width="1"/>
<text x="699.8" y="594.9" font-size="13.0" fill="#fff" textLength="26.2" lengthAdjust="spacingAndGlyphs" stroke="#fff" stroke-width="0.22">Cyan</text>
<rect x="754.00" y="448.20" width="62.20" height="131.60" fill="#fff"/>
<rect x="755.20" y="449.40" width="59.80" height="129.20" fill="#c400d4"/>
<rect x="755.20" y="514.00" width="59.80" height="64.60" fill="#e42ec8"/>
<rect x="755.7" y="449.9" width="58.8" height="128.2" fill="none" stroke="#000" stroke-opacity="0.18" stroke-width="1"/>
<text x="761.5" y="594.9" font-size="13.0" fill="#fff" textLength="48.0" lengthAdjust="spacingAndGlyphs" stroke="#fff" stroke-width="0.22">Magenta</text>
<rect x="826.00" y="448.20" width="62.00" height="131.60" fill="#fff"/>
<rect x="827.20" y="449.40" width="59.60" height="129.20" fill="#c3d200"/>
<rect x="827.20" y="514.00" width="59.60" height="64.60" fill="#c8c800"/>
<rect x="827.7" y="449.9" width="58.6" height="128.2" fill="none" stroke="#000" stroke-opacity="0.18" stroke-width="1"/>
<text x="839.9" y="594.9" font-size="13.0" fill="#fff" textLength="35.0" lengthAdjust="spacingAndGlyphs" stroke="#fff" stroke-width="0.22">Yellow</text>
<rect x="898.00" y="448.20" width="63.00" height="131.60" fill="#fff"/>
<rect x="899.20" y="449.40" width="60.60" height="129.20" fill="#eef8ff"/>
<rect x="899.20" y="514.00" width="60.60" height="64.60" fill="#f5f5f5"/>
<rect x="899.7" y="449.9" width="59.6" height="128.2" fill="none" stroke="#000" stroke-opacity="0.18" stroke-width="1"/>
<text x="913.9" y="594.9" font-size="13.0" fill="#fff" textLength="32.0" lengthAdjust="spacingAndGlyphs" stroke="#fff" stroke-width="0.22">100W</text>
<text transform="translate(388.3,494.5) rotate(-90)" font-size="12.6" fill="#fff" textLength="35" lengthAdjust="spacingAndGlyphs">Actual</text>
<text transform="translate(388.3,568.5) rotate(-90)" font-size="12.6" fill="#fff" textLength="35" lengthAdjust="spacingAndGlyphs">Target</text>
<text x="1278.8" y="83.8" font-size="14.1" fill="#d0d0d0" textLength="83.3" lengthAdjust="spacingAndGlyphs" stroke="#d0d0d0" stroke-width="0.22">CIE 1976 u'v'</text>
<path d="M1292.0 567.9 L1681.5 166.0 L1681.6 165.6 L1681.5 165.2 L1222.4 112.2 L1162.9 105.6 L1123.1 101.7 L1102.4 100.2 L1086.5 99.4 L1068.3 99.3 L1056.3 99.8 L1047.8 100.7 L1042.5 101.8 L1039.9 102.6 L1035.1 104.6 L1032.9 105.9 L1028.7 109.2 L1025.2 113.3 L1023.7 115.7 L1021.3 121.3 L1019.7 127.9 L1018.9 135.6 L1019.0 144.4 L1019.5 149.3 L1021.1 160.4 L1023.8 173.2 L1027.6 187.8 L1032.8 204.5 L1039.4 223.2 L1047.4 243.7 L1056.7 265.5 L1067.2 288.5 L1073.0 300.3 L1085.5 324.0 L1098.9 347.6 L1112.5 370.7 L1126.2 392.9 L1132.9 403.5 L1146.2 423.4 L1158.9 441.4 L1171.0 457.6 L1182.4 472.0 L1192.8 484.3 L1201.9 494.4 L1213.8 506.5 L1224.5 516.5 L1237.1 527.5 L1275.6 559.6 L1283.5 565.8 L1287.8 568.4 L1290.1 568.6Z M1498.0 152.2 L1098.6 108.9 L1204.8 451.5Z" fill="#000" fill-opacity="0.4" fill-rule="evenodd" clip-path="url(#cpl)"/>
<path d="M1660 89.5H1017.5V581.5H1660" fill="none" stroke="#949494" stroke-width="1.5"/>
<line x1="1011.50" y1="581.50" x2="1017.50" y2="581.50" stroke="#d0d0d0" stroke-width="1.60"/>
<text x="1002.2" y="586.6" font-size="14.1" fill="#d0d0d0" textLength="8.1" lengthAdjust="spacingAndGlyphs" stroke="#d0d0d0" stroke-width="0.22">0</text>
<line x1="1018.00" y1="581.50" x2="1018.00" y2="587.50" stroke="#d0d0d0" stroke-width="1.60"/>
<text x="1014.0" y="603.2" font-size="14.1" fill="#d0d0d0" textLength="8.1" lengthAdjust="spacingAndGlyphs" stroke="#d0d0d0" stroke-width="0.22">0</text>
<line x1="1011.50" y1="541.30" x2="1017.50" y2="541.30" stroke="#d0d0d0" stroke-width="1.60"/>
<text x="982.0" y="546.4" font-size="14.1" fill="#d0d0d0" textLength="28.3" lengthAdjust="spacingAndGlyphs" stroke="#d0d0d0" stroke-width="0.22">0,05</text>
<line x1="1071.25" y1="581.50" x2="1071.25" y2="587.50" stroke="#d0d0d0" stroke-width="1.60"/>
<text x="1057.1" y="603.2" font-size="14.1" fill="#d0d0d0" textLength="28.3" lengthAdjust="spacingAndGlyphs" stroke="#d0d0d0" stroke-width="0.22">0,05</text>
<line x1="1011.50" y1="500.30" x2="1017.50" y2="500.30" stroke="#d0d0d0" stroke-width="1.60"/>
<text x="990.1" y="505.4" font-size="14.1" fill="#d0d0d0" textLength="20.2" lengthAdjust="spacingAndGlyphs" stroke="#d0d0d0" stroke-width="0.22">0,1</text>
<line x1="1124.50" y1="581.50" x2="1124.50" y2="587.50" stroke="#d0d0d0" stroke-width="1.60"/>
<text x="1114.4" y="603.2" font-size="14.1" fill="#d0d0d0" textLength="20.2" lengthAdjust="spacingAndGlyphs" stroke="#d0d0d0" stroke-width="0.22">0,1</text>
<line x1="1011.50" y1="459.30" x2="1017.50" y2="459.30" stroke="#d0d0d0" stroke-width="1.60"/>
<text x="982.0" y="464.4" font-size="14.1" fill="#d0d0d0" textLength="28.3" lengthAdjust="spacingAndGlyphs" stroke="#d0d0d0" stroke-width="0.22">0,15</text>
<line x1="1177.75" y1="581.50" x2="1177.75" y2="587.50" stroke="#d0d0d0" stroke-width="1.60"/>
<text x="1163.6" y="603.2" font-size="14.1" fill="#d0d0d0" textLength="28.3" lengthAdjust="spacingAndGlyphs" stroke="#d0d0d0" stroke-width="0.22">0,15</text>
<line x1="1011.50" y1="418.30" x2="1017.50" y2="418.30" stroke="#d0d0d0" stroke-width="1.60"/>
<text x="990.1" y="423.4" font-size="14.1" fill="#d0d0d0" textLength="20.2" lengthAdjust="spacingAndGlyphs" stroke="#d0d0d0" stroke-width="0.22">0,2</text>
<line x1="1231.00" y1="581.50" x2="1231.00" y2="587.50" stroke="#d0d0d0" stroke-width="1.60"/>
<text x="1220.9" y="603.2" font-size="14.1" fill="#d0d0d0" textLength="20.2" lengthAdjust="spacingAndGlyphs" stroke="#d0d0d0" stroke-width="0.22">0,2</text>
<line x1="1011.50" y1="377.30" x2="1017.50" y2="377.30" stroke="#d0d0d0" stroke-width="1.60"/>
<text x="982.0" y="382.4" font-size="14.1" fill="#d0d0d0" textLength="28.3" lengthAdjust="spacingAndGlyphs" stroke="#d0d0d0" stroke-width="0.22">0,25</text>
<line x1="1284.25" y1="581.50" x2="1284.25" y2="587.50" stroke="#d0d0d0" stroke-width="1.60"/>
<text x="1270.1" y="603.2" font-size="14.1" fill="#d0d0d0" textLength="28.3" lengthAdjust="spacingAndGlyphs" stroke="#d0d0d0" stroke-width="0.22">0,25</text>
<line x1="1011.50" y1="336.30" x2="1017.50" y2="336.30" stroke="#d0d0d0" stroke-width="1.60"/>
<text x="990.1" y="341.4" font-size="14.1" fill="#d0d0d0" textLength="20.2" lengthAdjust="spacingAndGlyphs" stroke="#d0d0d0" stroke-width="0.22">0,3</text>
<line x1="1337.50" y1="581.50" x2="1337.50" y2="587.50" stroke="#d0d0d0" stroke-width="1.60"/>
<text x="1327.4" y="603.2" font-size="14.1" fill="#d0d0d0" textLength="20.2" lengthAdjust="spacingAndGlyphs" stroke="#d0d0d0" stroke-width="0.22">0,3</text>
<line x1="1011.50" y1="295.30" x2="1017.50" y2="295.30" stroke="#d0d0d0" stroke-width="1.60"/>
<text x="982.0" y="300.4" font-size="14.1" fill="#d0d0d0" textLength="28.3" lengthAdjust="spacingAndGlyphs" stroke="#d0d0d0" stroke-width="0.22">0,35</text>
<line x1="1390.75" y1="581.50" x2="1390.75" y2="587.50" stroke="#d0d0d0" stroke-width="1.60"/>
<text x="1376.6" y="603.2" font-size="14.1" fill="#d0d0d0" textLength="28.3" lengthAdjust="spacingAndGlyphs" stroke="#d0d0d0" stroke-width="0.22">0,35</text>
<line x1="1011.50" y1="254.30" x2="1017.50" y2="254.30" stroke="#d0d0d0" stroke-width="1.60"/>
<text x="990.1" y="259.4" font-size="14.1" fill="#d0d0d0" textLength="20.2" lengthAdjust="spacingAndGlyphs" stroke="#d0d0d0" stroke-width="0.22">0,4</text>
<line x1="1444.00" y1="581.50" x2="1444.00" y2="587.50" stroke="#d0d0d0" stroke-width="1.60"/>
<text x="1433.9" y="603.2" font-size="14.1" fill="#d0d0d0" textLength="20.2" lengthAdjust="spacingAndGlyphs" stroke="#d0d0d0" stroke-width="0.22">0,4</text>
<line x1="1011.50" y1="213.30" x2="1017.50" y2="213.30" stroke="#d0d0d0" stroke-width="1.60"/>
<text x="982.0" y="218.4" font-size="14.1" fill="#d0d0d0" textLength="28.3" lengthAdjust="spacingAndGlyphs" stroke="#d0d0d0" stroke-width="0.22">0,45</text>
<line x1="1497.25" y1="581.50" x2="1497.25" y2="587.50" stroke="#d0d0d0" stroke-width="1.60"/>
<text x="1483.1" y="603.2" font-size="14.1" fill="#d0d0d0" textLength="28.3" lengthAdjust="spacingAndGlyphs" stroke="#d0d0d0" stroke-width="0.22">0,45</text>
<line x1="1011.50" y1="172.30" x2="1017.50" y2="172.30" stroke="#d0d0d0" stroke-width="1.60"/>
<text x="990.1" y="177.4" font-size="14.1" fill="#d0d0d0" textLength="20.2" lengthAdjust="spacingAndGlyphs" stroke="#d0d0d0" stroke-width="0.22">0,5</text>
<line x1="1550.50" y1="581.50" x2="1550.50" y2="587.50" stroke="#d0d0d0" stroke-width="1.60"/>
<text x="1540.4" y="603.2" font-size="14.1" fill="#d0d0d0" textLength="20.2" lengthAdjust="spacingAndGlyphs" stroke="#d0d0d0" stroke-width="0.22">0,5</text>
<line x1="1011.50" y1="131.30" x2="1017.50" y2="131.30" stroke="#d0d0d0" stroke-width="1.60"/>
<text x="982.0" y="136.4" font-size="14.1" fill="#d0d0d0" textLength="28.3" lengthAdjust="spacingAndGlyphs" stroke="#d0d0d0" stroke-width="0.22">0,55</text>
<line x1="1603.75" y1="581.50" x2="1603.75" y2="587.50" stroke="#d0d0d0" stroke-width="1.60"/>
<text x="1589.6" y="603.2" font-size="14.1" fill="#d0d0d0" textLength="28.3" lengthAdjust="spacingAndGlyphs" stroke="#d0d0d0" stroke-width="0.22">0,55</text>
<rect x="1091.4" y="101.7" width="13.2" height="13.2" fill="none" stroke="#f0f0f0" stroke-width="1.6"/>
<rect x="1227.7" y="116.7" width="13.2" height="13.2" fill="none" stroke="#f0f0f0" stroke-width="1.6"/>
<rect x="1490.7" y="145.7" width="13.2" height="13.2" fill="none" stroke="#f0f0f0" stroke-width="1.6"/>
<rect x="1124.7" y="206.7" width="13.2" height="13.2" fill="none" stroke="#f0f0f0" stroke-width="1.6"/>
<rect x="1356.7" y="281.9" width="13.2" height="13.2" fill="none" stroke="#f0f0f0" stroke-width="1.6"/>
<rect x="1197.9" y="444.9" width="13.2" height="13.2" fill="none" stroke="#f0f0f0" stroke-width="1.6"/>
<rect x="1221.8" y="190.1" width="12.8" height="12.8" fill="none" stroke="#000" stroke-width="1.7"/>
<circle cx="1147.0" cy="114.0" r="4.3" fill="#00a800" stroke="#000" stroke-width="1.2"/>
<circle cx="1220.7" cy="122.3" r="4.3" fill="#a0a000" stroke="#000" stroke-width="1.2"/>
<circle cx="1473.0" cy="153.0" r="4.3" fill="#c80000" stroke="#000" stroke-width="1.2"/>
<circle cx="1167.3" cy="212.3" r="4.3" fill="#00a8a8" stroke="#000" stroke-width="1.2"/>
<circle cx="1339.3" cy="336.3" r="4.3" fill="#a800a8" stroke="#000" stroke-width="1.2"/>
<circle cx="1226.3" cy="487.3" r="4.3" fill="#0000a0" stroke="#000" stroke-width="1.2"/>
<circle cx="1222.3" cy="201.0" r="4.3" fill="#fff" stroke="#000" stroke-width="1.2"/>
<rect x="1402.00" y="549.20" width="251.50" height="27.00" fill="#333"/>
<text x="1403.2" y="571.1" font-size="20.4" fill="#f4f4f4" textLength="221.0" lengthAdjust="spacingAndGlyphs" stroke="#f4f4f4" stroke-width="0.22">Gamut Coverage:  74,2%</text>
<rect x="356.40" y="655.40" width="249.70" height="180.60" fill="#242424"/>
<line x1="356.40" y1="674.60" x2="606.10" y2="674.60" stroke="#949494" stroke-width="1.60"/>
<line x1="350.90" y1="674.60" x2="356.40" y2="674.60" stroke="#d0d0d0" stroke-width="1.60"/>
<text x="324.8" y="679.7" font-size="14.1" fill="#d0d0d0" textLength="24.2" lengthAdjust="spacingAndGlyphs" stroke="#d0d0d0" stroke-width="0.22">104</text>
<line x1="356.40" y1="711.30" x2="606.10" y2="711.30" stroke="#949494" stroke-width="1.60"/>
<line x1="350.90" y1="711.30" x2="356.40" y2="711.30" stroke="#d0d0d0" stroke-width="1.60"/>
<text x="324.8" y="716.4" font-size="14.1" fill="#d0d0d0" textLength="24.2" lengthAdjust="spacingAndGlyphs" stroke="#d0d0d0" stroke-width="0.22">102</text>
<line x1="356.40" y1="747.00" x2="606.10" y2="747.00" stroke="#949494" stroke-width="1.60"/>
<line x1="350.90" y1="747.00" x2="356.40" y2="747.00" stroke="#d0d0d0" stroke-width="1.60"/>
<text x="324.8" y="752.1" font-size="14.1" fill="#d0d0d0" textLength="24.2" lengthAdjust="spacingAndGlyphs" stroke="#d0d0d0" stroke-width="0.22">100</text>
<line x1="356.40" y1="783.20" x2="606.10" y2="783.20" stroke="#949494" stroke-width="1.60"/>
<line x1="350.90" y1="783.20" x2="356.40" y2="783.20" stroke="#d0d0d0" stroke-width="1.60"/>
<text x="332.8" y="788.3" font-size="14.1" fill="#d0d0d0" textLength="16.2" lengthAdjust="spacingAndGlyphs" stroke="#d0d0d0" stroke-width="0.22">98</text>
<line x1="356.40" y1="819.30" x2="606.10" y2="819.30" stroke="#949494" stroke-width="1.60"/>
<line x1="350.90" y1="819.30" x2="356.40" y2="819.30" stroke="#d0d0d0" stroke-width="1.60"/>
<text x="332.8" y="824.4" font-size="14.1" fill="#d0d0d0" textLength="16.2" lengthAdjust="spacingAndGlyphs" stroke="#d0d0d0" stroke-width="0.22">96</text>
<rect x="356.40" y="655.40" width="249.70" height="180.60" fill="none" stroke="#949494" stroke-width="1.6"/>
<line x1="356.40" y1="836.00" x2="356.40" y2="841.50" stroke="#c8c8c8" stroke-width="1.40"/>
<line x1="606.10" y1="836.00" x2="606.10" y2="841.50" stroke="#c8c8c8" stroke-width="1.40"/>
<rect x="381.5" y="794.6" width="64.7" height="41.4" fill="url(#g21)" stroke="#000" stroke-width="1.4"/>
<rect x="447.7" y="732.3" width="64.6" height="103.7" fill="url(#g22)" stroke="#000" stroke-width="1.4"/>
<rect x="513.7" y="693.9" width="65.2" height="142.1" fill="url(#g23)" stroke="#000" stroke-width="1.4"/>
<line x1="356.40" y1="836.00" x2="606.10" y2="836.00" stroke="#949494" stroke-width="1.50"/>
<text x="425.6" y="650.4" font-size="14.1" fill="#d0d0d0" textLength="81.8" lengthAdjust="spacingAndGlyphs" stroke="#d0d0d0" stroke-width="0.22">RGB Balance</text>
<text x="462.4" y="852.5" font-size="13.9" fill="#d0d0d0" textLength="38.1" lengthAdjust="spacingAndGlyphs" stroke="#d0d0d0" stroke-width="0.22">100W</text>
<text x="769.3" y="641.8" font-size="14.1" fill="#d0d0d0" textLength="74.9" lengthAdjust="spacingAndGlyphs" stroke="#d0d0d0" stroke-width="0.22">CIE 1931 xy</text>
<rect x="636.6" y="647.3" width="341" height="198.2" fill="none" stroke="#9a9a9a" stroke-opacity="0.75" stroke-width="1.1"/>
<rect x="799.9" y="738.9" width="13.0" height="13.0" fill="#fff" stroke="#000" stroke-width="1.8"/>
<circle cx="729.5" cy="768.6" r="4.3" fill="#c0c0c0" stroke="#000" stroke-width="1.2"/>
<circle cx="723.9" cy="770.1" r="4.3" fill="#fff" stroke="#000" stroke-width="1.2"/>
<rect x="994.00" y="631.00" width="653.30" height="224.80" fill="#000"/>
<rect x="995.20" y="633.00" width="633.30" height="38.70" fill="url(#g24)"/>
<rect x="1628.90" y="633.00" width="17.00" height="222.80" fill="#383838"/>
<rect x="995.20" y="671.60" width="633.30" height="36.20" fill="#434343"/>
<rect x="995.20" y="707.80" width="633.30" height="36.50" fill="#808080"/>
<rect x="995.20" y="744.30" width="633.30" height="36.20" fill="#434343"/>
<rect x="995.20" y="780.50" width="633.30" height="36.90" fill="#808080"/>
<rect x="995.20" y="817.40" width="633.30" height="15.60" fill="#434343"/>
<rect x="1628.90" y="633.00" width="17.00" height="222.80" fill="#383838"/>
<text x="1106.0" y="659.7" font-size="21.6" fill="#f6f6f6" textLength="42.0" lengthAdjust="spacingAndGlyphs" stroke="#f6f6f6" stroke-width="0.45">White</text>
<text x="1187.1" y="659.7" font-size="21.6" fill="#f6f6f6" textLength="26.1" lengthAdjust="spacingAndGlyphs" stroke="#f6f6f6" stroke-width="0.45">Red</text>
<text x="1251.8" y="659.7" font-size="21.6" fill="#f6f6f6" textLength="42.7" lengthAdjust="spacingAndGlyphs" stroke="#f6f6f6" stroke-width="0.45">Green</text>
<text x="1330.9" y="659.7" font-size="21.6" fill="#f6f6f6" textLength="30.6" lengthAdjust="spacingAndGlyphs" stroke="#f6f6f6" stroke-width="0.45">Blue</text>
<text x="1402.5" y="659.7" font-size="21.6" fill="#f6f6f6" textLength="33.6" lengthAdjust="spacingAndGlyphs" stroke="#f6f6f6" stroke-width="0.45">Cyan</text>
<text x="1466.1" y="659.7" font-size="21.6" fill="#f6f6f6" textLength="61.7" lengthAdjust="spacingAndGlyphs" stroke="#f6f6f6" stroke-width="0.45">Magenta</text>
<text x="1552.8" y="659.7" font-size="21.6" fill="#f6f6f6" textLength="44.1" lengthAdjust="spacingAndGlyphs" stroke="#f6f6f6" stroke-width="0.45">Yellow</text>
<g clip-path="url(#cpt)">
<text x="1008.0" y="698.7" font-size="22.7" fill="#f6f6f6" textLength="62.8" lengthAdjust="spacingAndGlyphs" font-weight="bold" stroke="#f6f6f6" stroke-width="0.30">x: CIE31</text>
<text x="1092.7" y="699.0" font-size="22.5" fill="#f6f6f6" textLength="50.2" lengthAdjust="spacingAndGlyphs" stroke="#f6f6f6" stroke-width="0.45">0,3014</text>
<text x="1170.6" y="699.0" font-size="22.5" fill="#f6f6f6" textLength="50.2" lengthAdjust="spacingAndGlyphs" stroke="#f6f6f6" stroke-width="0.45">0,6189</text>
<text x="1238.7" y="699.0" font-size="22.5" fill="#f6f6f6" textLength="50.2" lengthAdjust="spacingAndGlyphs" stroke="#f6f6f6" stroke-width="0.45">0,3023</text>
<text x="1316.4" y="699.0" font-size="22.5" fill="#f6f6f6" textLength="50.2" lengthAdjust="spacingAndGlyphs" stroke="#f6f6f6" stroke-width="0.45">0,1557</text>
<text x="1385.0" y="699.0" font-size="22.5" fill="#f6f6f6" textLength="50.2" lengthAdjust="spacingAndGlyphs" stroke="#f6f6f6" stroke-width="0.45">0,2249</text>
<text x="1462.6" y="699.0" font-size="22.5" fill="#f6f6f6" textLength="50.2" lengthAdjust="spacingAndGlyphs" stroke="#f6f6f6" stroke-width="0.45">0,3016</text>
<text x="1540.3" y="699.0" font-size="22.5" fill="#f6f6f6" textLength="50.2" lengthAdjust="spacingAndGlyphs" stroke="#f6f6f6" stroke-width="0.45">0,4083</text>
<text x="1619.0" y="699.0" font-size="22.5" fill="#f6f6f6" textLength="50.2" lengthAdjust="spacingAndGlyphs" stroke="#f6f6f6" stroke-width="0.45">0,3127</text>
<text x="1008.0" y="734.8" font-size="22.7" fill="#f6f6f6" textLength="62.8" lengthAdjust="spacingAndGlyphs" font-weight="bold" stroke="#f6f6f6" stroke-width="0.30">y: CIE31</text>
<text x="1092.7" y="735.1" font-size="22.5" fill="#f6f6f6" textLength="50.2" lengthAdjust="spacingAndGlyphs" stroke="#f6f6f6" stroke-width="0.45">0,3231</text>
<text x="1170.6" y="735.1" font-size="22.5" fill="#f6f6f6" textLength="50.2" lengthAdjust="spacingAndGlyphs" stroke="#f6f6f6" stroke-width="0.45">0,3348</text>
<text x="1238.7" y="735.1" font-size="22.5" fill="#f6f6f6" textLength="50.2" lengthAdjust="spacingAndGlyphs" stroke="#f6f6f6" stroke-width="0.45">0,6299</text>
<text x="1316.4" y="735.1" font-size="22.5" fill="#f6f6f6" textLength="50.2" lengthAdjust="spacingAndGlyphs" stroke="#f6f6f6" stroke-width="0.45">0,0402</text>
<text x="1385.0" y="735.1" font-size="22.5" fill="#f6f6f6" textLength="50.2" lengthAdjust="spacingAndGlyphs" stroke="#f6f6f6" stroke-width="0.45">0,3187</text>
<text x="1462.6" y="735.1" font-size="22.5" fill="#f6f6f6" textLength="50.2" lengthAdjust="spacingAndGlyphs" stroke="#f6f6f6" stroke-width="0.45">0,1327</text>
<text x="1540.3" y="735.1" font-size="22.5" fill="#f6f6f6" textLength="50.2" lengthAdjust="spacingAndGlyphs" stroke="#f6f6f6" stroke-width="0.45">0,5322</text>
<text x="1619.0" y="735.1" font-size="22.5" fill="#f6f6f6" textLength="50.2" lengthAdjust="spacingAndGlyphs" stroke="#f6f6f6" stroke-width="0.45">0,3290</text>
<text x="1008.0" y="770.9" font-size="22.7" fill="#f6f6f6" textLength="9.5" lengthAdjust="spacingAndGlyphs" font-weight="bold" stroke="#f6f6f6" stroke-width="0.30">Y</text>
<text x="1092.7" y="771.2" font-size="22.5" fill="#f6f6f6" textLength="68.7" lengthAdjust="spacingAndGlyphs" stroke="#f6f6f6" stroke-width="0.45">272,2526</text>
<text x="1170.6" y="771.2" font-size="22.5" fill="#f6f6f6" textLength="59.2" lengthAdjust="spacingAndGlyphs" stroke="#f6f6f6" stroke-width="0.45">54,1703</text>
<text x="1238.7" y="771.2" font-size="22.5" fill="#f6f6f6" textLength="68.7" lengthAdjust="spacingAndGlyphs" stroke="#f6f6f6" stroke-width="0.45">201,9137</text>
<text x="1316.4" y="771.2" font-size="22.5" fill="#f6f6f6" textLength="59.2" lengthAdjust="spacingAndGlyphs" stroke="#f6f6f6" stroke-width="0.45">14,2911</text>
<text x="1385.0" y="771.2" font-size="22.5" fill="#f6f6f6" textLength="68.7" lengthAdjust="spacingAndGlyphs" stroke="#f6f6f6" stroke-width="0.45">216,0021</text>
<text x="1462.6" y="771.2" font-size="22.5" fill="#f6f6f6" textLength="59.2" lengthAdjust="spacingAndGlyphs" stroke="#f6f6f6" stroke-width="0.45">68,6025</text>
<text x="1540.3" y="771.2" font-size="22.5" fill="#f6f6f6" textLength="68.7" lengthAdjust="spacingAndGlyphs" stroke="#f6f6f6" stroke-width="0.45">257,7320</text>
<text x="1619.0" y="771.2" font-size="22.5" fill="#f6f6f6" textLength="68.7" lengthAdjust="spacingAndGlyphs" stroke="#f6f6f6" stroke-width="0.45">476,0000</text>
<text x="1008.0" y="807.1" font-size="22.7" fill="#f6f6f6" textLength="66.0" lengthAdjust="spacingAndGlyphs" font-weight="bold" stroke="#f6f6f6" stroke-width="0.30">Target Y</text>
<text x="1092.7" y="807.4" font-size="22.5" fill="#f6f6f6" textLength="68.7" lengthAdjust="spacingAndGlyphs" stroke="#f6f6f6" stroke-width="0.45">272,2526</text>
<text x="1170.6" y="807.4" font-size="22.5" fill="#f6f6f6" textLength="59.2" lengthAdjust="spacingAndGlyphs" stroke="#f6f6f6" stroke-width="0.45">80,9572</text>
<text x="1238.7" y="807.4" font-size="22.5" fill="#f6f6f6" textLength="68.7" lengthAdjust="spacingAndGlyphs" stroke="#f6f6f6" stroke-width="0.45">170,7989</text>
<text x="1316.4" y="807.4" font-size="22.5" fill="#f6f6f6" textLength="59.2" lengthAdjust="spacingAndGlyphs" stroke="#f6f6f6" stroke-width="0.45">20,4965</text>
<text x="1385.0" y="807.4" font-size="22.5" fill="#f6f6f6" textLength="68.7" lengthAdjust="spacingAndGlyphs" stroke="#f6f6f6" stroke-width="0.45">191,2954</text>
<text x="1462.6" y="807.4" font-size="22.5" fill="#f6f6f6" textLength="68.7" lengthAdjust="spacingAndGlyphs" stroke="#f6f6f6" stroke-width="0.45">101,4537</text>
<text x="1540.3" y="807.4" font-size="22.5" fill="#f6f6f6" textLength="68.7" lengthAdjust="spacingAndGlyphs" stroke="#f6f6f6" stroke-width="0.45">251,7562</text>
<text x="1619.0" y="807.4" font-size="22.5" fill="#f6f6f6" textLength="68.7" lengthAdjust="spacingAndGlyphs" stroke="#f6f6f6" stroke-width="0.45">476,0000</text>
<text x="1008.0" y="843.3" font-size="22.7" fill="#f6f6f6" textLength="65.0" lengthAdjust="spacingAndGlyphs" font-weight="bold" stroke="#f6f6f6" stroke-width="0.30">ΔE 2000</text>
<text x="1092.7" y="843.6" font-size="22.5" fill="#f6f6f6" textLength="50.2" lengthAdjust="spacingAndGlyphs" stroke="#f6f6f6" stroke-width="0.45">4,7299</text>
<text x="1170.6" y="843.6" font-size="22.5" fill="#f6f6f6" textLength="50.2" lengthAdjust="spacingAndGlyphs" stroke="#f6f6f6" stroke-width="0.45">8,6253</text>
<text x="1238.7" y="843.6" font-size="22.5" fill="#f6f6f6" textLength="50.2" lengthAdjust="spacingAndGlyphs" stroke="#f6f6f6" stroke-width="0.45">9,6266</text>
<text x="1316.4" y="843.6" font-size="22.5" fill="#f6f6f6" textLength="50.2" lengthAdjust="spacingAndGlyphs" stroke="#f6f6f6" stroke-width="0.45">7,1918</text>
<text x="1385.0" y="843.6" font-size="22.5" fill="#f6f6f6" textLength="50.2" lengthAdjust="spacingAndGlyphs" stroke="#f6f6f6" stroke-width="0.45">9,3939</text>
<text x="1462.6" y="843.6" font-size="22.5" fill="#f6f6f6" textLength="50.2" lengthAdjust="spacingAndGlyphs" stroke="#f6f6f6" stroke-width="0.45">9,9689</text>
<text x="1540.3" y="843.6" font-size="22.5" fill="#f6f6f6" textLength="50.2" lengthAdjust="spacingAndGlyphs" stroke="#f6f6f6" stroke-width="0.45">4,4691</text>
<text x="1619.0" y="843.6" font-size="22.5" fill="#f6f6f6" textLength="50.2" lengthAdjust="spacingAndGlyphs" stroke="#f6f6f6" stroke-width="0.45">6,0312</text>
</g>
<path d="M1628.9 672H1645.9V830Q1645.9 833 1643 833H1628.9Z" fill="#595959"/>
<rect x="1630.4" y="672.9" width="13.8" height="20.0" rx="3" fill="#848484" stroke="#6c6c6c" stroke-width="0.8"/>
<path d="M1637.3 679.6l5.6 7h-11.2z" fill="#474747"/>
<rect x="1630.4" y="812.4" width="13.8" height="18.6" rx="3" fill="#848484" stroke="#6c6c6c" stroke-width="0.8"/>
<path d="M1637.3 825.4l5.6 -7h-11.2z" fill="#474747"/>
<rect x="1631" y="697" width="13.6" height="87.6" rx="6.5" fill="#464646"/>
<path d="M995.1 833H1629.3V855.8H998Q995.1 855.8 995.1 853Z" fill="#595959"/>
<rect x="997.0" y="835.2" width="13.8" height="18.7" rx="3" fill="#848484" stroke="#6c6c6c" stroke-width="0.8"/>
<path d="M1000.7 844.6l6 -7v14z" fill="#474747"/>
<rect x="1613.2" y="835.2" width="13.9" height="18.9" rx="3" fill="#848484" stroke="#6c6c6c" stroke-width="0.8"/>
<path d="M1623.4 844.7l-6 -7v14z" fill="#474747"/>
<rect x="1014.6" y="834.2" width="540" height="19.7" rx="8" fill="#464646"/>
<path d="M0.5 942V874Q0.5 869.6 5.0 869.6H150.8Q155.3 869.6 155.3 874V942Z" fill="url(#g25)"/>
<rect x="7.1" y="875.7" width="142.6" height="45.2" rx="4.5" fill="#c0c0c0" stroke="#00000030" stroke-width="1"/>
<text x="59.9" y="939.7" font-size="13.1" fill="#262626" textLength="36.4" lengthAdjust="spacingAndGlyphs" font-weight="bold">White</text>
<path d="M158.4 942V874Q158.4 869.6 162.9 869.6H308.7Q313.2 869.6 313.2 874V942Z" fill="url(#g25)"/>
<rect x="165.0" y="875.7" width="142.6" height="45.2" rx="4.5" fill="#c00000" stroke="#00000030" stroke-width="1"/>
<text x="224.6" y="939.7" font-size="13.1" fill="#262626" textLength="22.8" lengthAdjust="spacingAndGlyphs" font-weight="bold">Red</text>
<path d="M316.3 942V874Q316.3 869.6 320.8 869.6H466.6Q471.1 869.6 471.1 874V942Z" fill="url(#g25)"/>
<rect x="322.9" y="875.7" width="142.6" height="45.2" rx="4.5" fill="#00c000" stroke="#00000030" stroke-width="1"/>
<text x="375.4" y="939.7" font-size="13.1" fill="#262626" textLength="37.0" lengthAdjust="spacingAndGlyphs" font-weight="bold">Green</text>
<path d="M474.3 942V874Q474.3 869.6 478.8 869.6H624.6Q629.1 869.6 629.1 874V942Z" fill="url(#g25)"/>
<rect x="480.9" y="875.7" width="142.6" height="45.2" rx="4.5" fill="#0000c0" stroke="#00000030" stroke-width="1"/>
<text x="538.4" y="939.7" font-size="13.1" fill="#262626" textLength="27.0" lengthAdjust="spacingAndGlyphs" font-weight="bold">Blue</text>
<path d="M632.2 942V874Q632.2 869.6 636.7 869.6H782.5Q787.0 869.6 787.0 874V942Z" fill="url(#g25)"/>
<rect x="638.8" y="875.7" width="142.6" height="45.2" rx="4.5" fill="#00c0c0" stroke="#00000030" stroke-width="1"/>
<text x="695.3" y="939.7" font-size="13.1" fill="#262626" textLength="29.0" lengthAdjust="spacingAndGlyphs" font-weight="bold">Cyan</text>
<path d="M790.1 942V874Q790.1 869.6 794.6 869.6H940.4Q944.9 869.6 944.9 874V942Z" fill="url(#g25)"/>
<rect x="796.7" y="875.7" width="142.6" height="45.2" rx="4.5" fill="#c000c0" stroke="#00000030" stroke-width="1"/>
<text x="841.2" y="939.7" font-size="13.1" fill="#262626" textLength="53.0" lengthAdjust="spacingAndGlyphs" font-weight="bold">Magenta</text>
<path d="M948.0 942V874Q948.0 869.6 952.5 869.6H1098.3Q1102.8 869.6 1102.8 874V942Z" fill="url(#g25)"/>
<rect x="954.6" y="875.7" width="142.6" height="45.2" rx="4.5" fill="#c0c000" stroke="#00000030" stroke-width="1"/>
<text x="1005.9" y="939.7" font-size="13.1" fill="#262626" textLength="39.5" lengthAdjust="spacingAndGlyphs" font-weight="bold">Yellow</text>
<path d="M1105.8 942V874Q1105.8 870 1110 870H1257Q1261.5 870 1261.5 874V942Z" fill="url(#g26)"/>
<rect x="1112.4" y="875.6" width="143" height="45.7" rx="4" fill="#fff"/>
<text x="1166.1" y="939.8" font-size="13.1" fill="#fff" textLength="35.6" lengthAdjust="spacingAndGlyphs" font-weight="bold">100W</text>
<path d="M1265 942V874Q1265 869.6 1269.5 869.6H1320.5Q1325.2 869.6 1325.2 874V942Z" fill="url(#g27)"/>
<line x1="1265.00" y1="892.30" x2="1325.20" y2="892.30" stroke="#4a4a4a" stroke-width="1.20"/>
<circle cx="1295.5" cy="881.2" r="9.5" fill="url(#g28)"/>
<path d="M1295.5 877.6l5.6 5.6h-11.2z" fill="#333"/>
<rect x="1277" y="902" width="36" height="35" rx="4" fill="url(#g29)" stroke="#1e1e1e" stroke-width="3"/>
<rect x="1287.00" y="911.00" width="17.00" height="17.00" fill="#000"/>
<rect x="1326.40" y="869.40" width="57.50" height="37.70" fill="url(#g30)"/>
<circle cx="1355.2" cy="888.3" r="12.3" fill="url(#g31)"/>
<rect x="1350.45" y="883.60" width="9.40" height="9.20" fill="#333"/>
<rect x="1385.00" y="869.40" width="55.00" height="37.70" fill="url(#g30)"/>
<circle cx="1412.5" cy="888.3" r="12.3" fill="url(#g32)"/>
<path d="M1408.9 882.3v12l10-6z" fill="#333"/>
<rect x="1441.10" y="869.40" width="54.90" height="37.70" fill="url(#g30)"/>
<circle cx="1468.5" cy="888.3" r="12.3" fill="url(#g33)"/>
<text x="1460.5" y="893.4" font-size="15.0" fill="#333" textLength="16.0" lengthAdjust="spacingAndGlyphs" font-weight="bold" stroke="#333" stroke-width="0.22">[··]</text>
<rect x="1498.20" y="869.40" width="54.90" height="37.70" fill="url(#g30)"/>
<circle cx="1525.7" cy="888.3" r="12.3" fill="url(#g34)"/>
<text x="1516.7" y="894.6" font-size="20.0" fill="#333" textLength="18.0" lengthAdjust="spacingAndGlyphs" font-weight="bold" stroke="#333" stroke-width="0.22">∞</text>
<rect x="1554.20" y="869.40" width="54.90" height="37.70" fill="url(#g30)"/>
<circle cx="1581.7" cy="888.3" r="12.3" fill="url(#g35)"/>
<path d="M1575.9 887a6 6 0 0 1 10.4 -2.6M1587.5 889.6a6 6 0 0 1 -10.4 2.6" fill="none" stroke="#333" stroke-width="2.6"/>
<path d="M1588.5 880.6v6h-6zM1574.9 896v-6h6z" fill="#333"/>
<rect x="1326.40" y="908.40" width="169.60" height="34.00" fill="url(#g36)"/>
<rect x="1498.20" y="908.40" width="156.80" height="34.00" fill="url(#g36)"/>
<circle cx="1364.7" cy="927.3" r="12.3" fill="url(#g37)"/>
<text x="1359.2" y="935.6" font-size="27.0" fill="#383838" textLength="11.0" lengthAdjust="spacingAndGlyphs" stroke="#383838" stroke-width="0.22">«</text>
<circle cx="1631.9" cy="927.3" r="12.3" fill="url(#g38)"/>
<text x="1626.4" y="935.6" font-size="27.0" fill="#383838" textLength="11.0" lengthAdjust="spacingAndGlyphs" stroke="#383838" stroke-width="0.22">»</text>
<text x="1398.3" y="937.7" font-size="29.6" fill="#c4c4c4" textLength="62.2" lengthAdjust="spacingAndGlyphs" stroke="#c4c4c4" stroke-width="0.22">Back</text>
<text x="1398.3" y="936.8" font-size="29.6" fill="#3a3a3a" textLength="62.2" lengthAdjust="spacingAndGlyphs" stroke="#3a3a3a" stroke-width="0.5">Back</text>
<text x="1532.3" y="937.7" font-size="29.6" fill="#c4c4c4" textLength="64.0" lengthAdjust="spacingAndGlyphs" stroke="#c4c4c4" stroke-width="0.22">Next</text>
<text x="1532.3" y="936.8" font-size="29.6" fill="#3a3a3a" textLength="64.0" lengthAdjust="spacingAndGlyphs" stroke="#3a3a3a" stroke-width="0.5">Next</text>
<text transform="translate(1620.8,936.0) scale(1,1.11)" font-family="DejaVu Sans" font-weight="bold" font-size="85" fill="#2a0000" fill-opacity="0.6">*</text>
<text transform="translate(1619.6,935.0) scale(1,1.11)" font-family="DejaVu Sans" font-weight="bold" font-size="85" fill="#e20c0c">*</text></svg></body></html>
